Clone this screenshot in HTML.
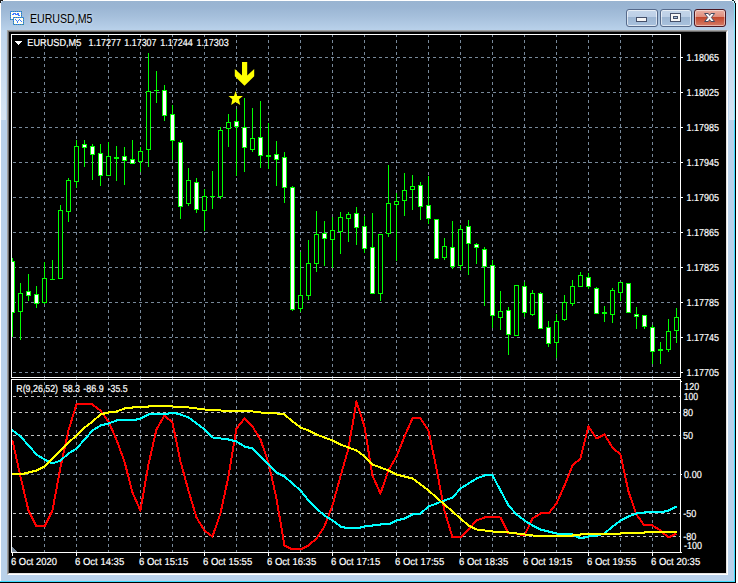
<!DOCTYPE html>
<html lang="en">
<head>
<meta charset="utf-8">
<title>EURUSD,M5</title>
<style>
html,body{margin:0;padding:0;background:#fff;}
body{width:738px;height:583px;overflow:hidden;position:relative;font-family:"Liberation Sans",sans-serif;}
#win{position:absolute;left:0;top:0;width:738px;height:583px;overflow:hidden;}
#frame{position:absolute;left:1px;top:1px;width:733px;height:580px;background:#b9d1ea;}
#titlebar{position:absolute;left:0;top:0;width:733px;height:29px;background:linear-gradient(to bottom,#99b4d1 0px,#9ab5d3 6px,#a6c0dc 16px,#b9d1ea 29px);}
#title{position:absolute;left:28.6px;top:10px;font-size:13px;line-height:16px;color:#000;white-space:pre;transform-origin:0 0;transform:scaleX(0.815);text-shadow:0 0 4px rgba(255,255,255,.7);}
.btn{position:absolute;box-sizing:border-box;top:8px;width:32px;height:18px;border:1px solid #566a8b;border-radius:3px;box-shadow:inset 0 0 0 1px rgba(255,255,255,.6);background:linear-gradient(to bottom,#c4d5ea 0,#bccfe6 7px,#9cb5d2 7px,#a9c2de 16px);}
#bmin{left:625px;} #bmax{left:659px;}
#bclose{left:693px;border-color:#4b1722;box-shadow:inset 0 0 0 1px rgba(255,255,255,.45);background:linear-gradient(to bottom,#eab0a4 0,#df8d7c 7px,#c1452b 7px,#d67c67 16px);}
#edge{position:absolute;left:6px;top:29px;width:717px;height:541px;border-style:solid;border-width:2px;border-color:#a0a0a0 #fff #fff #a0a0a0;}
#edge2{position:absolute;left:7px;top:30px;width:717px;height:541px;border-style:solid;border-width:1px;border-color:#696969 #e3e3e3 #e3e3e3 #696969;}
svg{position:absolute;left:0;top:0;}
svg text{font-family:"Liberation Sans",sans-serif;stroke:#fff;stroke-width:0.2px;text-rendering:geometricPrecision;}
</style>
</head>
<body>
<div id="win">
<div id="frame">
  <div id="titlebar">
    <div id="title">EURUSD,M5</div>
    <div class="btn" id="bmin"></div>
    <div class="btn" id="bmax"></div>
    <div class="btn" id="bclose"></div>
  </div>
  <div id="edge"></div><div id="edge2"></div>
</div>
<svg id="deco" width="738" height="583" viewBox="0 0 738 583" shape-rendering="crispEdges">
<rect x="0" y="581" width="735" height="1" fill="#3ddcff"/>
<rect x="0" y="582" width="736" height="1" fill="#000"/>
<rect x="734" y="3" width="1" height="579" fill="#3ddcff"/>
<rect x="734" y="3" width="1" height="117" fill="#fff" fill-opacity="0.35"/>
<rect x="735" y="3" width="1" height="580" fill="#000"/>
<path d="M0 0h3v1h-2v2h-1z" fill="#1c1c1c"/>
<rect x="1" y="1" width="1" height="1" fill="#e8eef6"/>
<path d="M732 0h2v1h1v2h-1v-2h-2z" fill="#0c2a30"/>
<path d="M732 1h2v2h-1v-1h-1z" fill="#d4f4fc"/>
<rect x="735" y="0" width="1" height="3" fill="#e4e4e4"/>
<defs><linearGradient id="hl" x1="0" y1="0" x2="0" y2="1"><stop offset="0" stop-color="#fff" stop-opacity="0.08"/><stop offset="1" stop-color="#fff" stop-opacity="0.42"/></linearGradient></defs>
<rect x="1" y="30" width="5" height="90" fill="url(#hl)"/>
<rect x="729" y="30" width="5" height="90" fill="url(#hl)"/>
<g id="icon">
<rect x="10.5" y="11.5" width="11" height="8" fill="#fffff4" stroke="#3f86ff"/>
<rect x="10.5" y="11.5" width="11" height="8" fill="none" stroke="#3f8f8f" stroke-dasharray="1 1"/>
<path d="M12 14.5h1.5v-1h1.5v1h2v-1h1.5v1.5h1.5" fill="none" stroke="#3f7cff"/>
<rect x="13.5" y="17.5" width="10" height="7" fill="#fffff4" stroke="#3f86ff"/>
<rect x="13.5" y="17.5" width="10" height="7" fill="none" stroke="#3f8f8f" stroke-dasharray="1 1"/>
<path d="M15 19h1v1h1v1h1v1h1v-1h0v-1h1v-1h1v1h0v1h1v1h1v-1" fill="none" stroke="none"/>
<path fill="#3f7cff" d="M15 19h1v1h-1zM16 20h1v1h-1zM17 21h1v1h-1zM18 20h1v1h-1zM19 19h1v1h-1zM20 20h1v1h-1zM21 21h1v1h-1zM17 22h1v1h-1z"/>
</g>
<g id="glyphs">
<rect x="636.5" y="17.5" width="10" height="4" fill="#f6f6f6" stroke="#45506a"/>
<rect x="670.5" y="13.5" width="10" height="8" fill="#f6f6f6" stroke="#45506a"/>
<rect x="673.5" y="16.5" width="4" height="2" fill="#a9c3df" stroke="#45506a"/>
</g>
<g id="xglyph" shape-rendering="geometricPrecision">
<path d="M704.6 13.5h3.7l1.3 1.9l1.3-1.9h3.7l-3.2 4l3.2 4h-3.7l-1.3-1.9l-1.3 1.9h-3.7l3.2-4z" fill="#fafafa" stroke="#474a60" stroke-width="1" stroke-linejoin="round"/>
</g>
</svg>
<svg id="chart" width="738" height="583" viewBox="0 0 738 583" shape-rendering="crispEdges">
<rect x="9" y="32" width="717" height="541" fill="#000"/>
<g id="grid">
<path fill="#778899" d="M44 35v2h1v-2zM44 40v3h1v-3zM44 46v3h1v-3zM44 52v3h1v-3zM44 58v3h1v-3zM44 64v3h1v-3zM44 70v3h1v-3zM44 76v3h1v-3zM44 82v3h1v-3zM44 88v3h1v-3zM44 94v3h1v-3zM44 100v3h1v-3zM44 106v3h1v-3zM44 112v3h1v-3zM44 118v3h1v-3zM44 124v3h1v-3zM44 130v3h1v-3zM44 136v3h1v-3zM44 142v3h1v-3zM44 148v3h1v-3zM44 154v3h1v-3zM44 160v3h1v-3zM44 166v3h1v-3zM44 172v3h1v-3zM44 178v3h1v-3zM44 184v3h1v-3zM44 190v3h1v-3zM44 196v3h1v-3zM44 202v3h1v-3zM44 208v3h1v-3zM44 214v3h1v-3zM44 220v3h1v-3zM44 226v3h1v-3zM44 232v3h1v-3zM44 238v3h1v-3zM44 244v3h1v-3zM44 250v3h1v-3zM44 256v3h1v-3zM44 262v3h1v-3zM44 268v3h1v-3zM44 274v3h1v-3zM44 280v3h1v-3zM44 286v3h1v-3zM44 292v3h1v-3zM44 298v3h1v-3zM44 304v3h1v-3zM44 310v3h1v-3zM44 316v3h1v-3zM44 322v3h1v-3zM44 328v3h1v-3zM44 334v3h1v-3zM44 340v3h1v-3zM44 346v3h1v-3zM44 352v3h1v-3zM44 358v3h1v-3zM44 364v3h1v-3zM44 370v3h1v-3zM44 376v3h1v-3zM44 382v3h1v-3zM44 388v3h1v-3zM44 394v3h1v-3zM44 400v3h1v-3zM44 406v3h1v-3zM44 412v3h1v-3zM44 418v3h1v-3zM44 424v3h1v-3zM44 430v3h1v-3zM44 436v3h1v-3zM44 442v3h1v-3zM44 448v3h1v-3zM44 454v3h1v-3zM44 460v3h1v-3zM44 466v3h1v-3zM44 472v3h1v-3zM44 478v3h1v-3zM44 484v3h1v-3zM44 490v3h1v-3zM44 496v3h1v-3zM44 502v3h1v-3zM44 508v3h1v-3zM44 514v3h1v-3zM44 520v3h1v-3zM44 526v3h1v-3zM44 532v3h1v-3zM44 538v3h1v-3zM44 544v3h1v-3zM44 550v2h1v-2z"/>
<path fill="#778899" d="M76 35v2h1v-2zM76 40v3h1v-3zM76 46v3h1v-3zM76 52v3h1v-3zM76 58v3h1v-3zM76 64v3h1v-3zM76 70v3h1v-3zM76 76v3h1v-3zM76 82v3h1v-3zM76 88v3h1v-3zM76 94v3h1v-3zM76 100v3h1v-3zM76 106v3h1v-3zM76 112v3h1v-3zM76 118v3h1v-3zM76 124v3h1v-3zM76 130v3h1v-3zM76 136v3h1v-3zM76 142v3h1v-3zM76 148v3h1v-3zM76 154v3h1v-3zM76 160v3h1v-3zM76 166v3h1v-3zM76 172v3h1v-3zM76 178v3h1v-3zM76 184v3h1v-3zM76 190v3h1v-3zM76 196v3h1v-3zM76 202v3h1v-3zM76 208v3h1v-3zM76 214v3h1v-3zM76 220v3h1v-3zM76 226v3h1v-3zM76 232v3h1v-3zM76 238v3h1v-3zM76 244v3h1v-3zM76 250v3h1v-3zM76 256v3h1v-3zM76 262v3h1v-3zM76 268v3h1v-3zM76 274v3h1v-3zM76 280v3h1v-3zM76 286v3h1v-3zM76 292v3h1v-3zM76 298v3h1v-3zM76 304v3h1v-3zM76 310v3h1v-3zM76 316v3h1v-3zM76 322v3h1v-3zM76 328v3h1v-3zM76 334v3h1v-3zM76 340v3h1v-3zM76 346v3h1v-3zM76 352v3h1v-3zM76 358v3h1v-3zM76 364v3h1v-3zM76 370v3h1v-3zM76 376v3h1v-3zM76 382v3h1v-3zM76 388v3h1v-3zM76 394v3h1v-3zM76 400v3h1v-3zM76 406v3h1v-3zM76 412v3h1v-3zM76 418v3h1v-3zM76 424v3h1v-3zM76 430v3h1v-3zM76 436v3h1v-3zM76 442v3h1v-3zM76 448v3h1v-3zM76 454v3h1v-3zM76 460v3h1v-3zM76 466v3h1v-3zM76 472v3h1v-3zM76 478v3h1v-3zM76 484v3h1v-3zM76 490v3h1v-3zM76 496v3h1v-3zM76 502v3h1v-3zM76 508v3h1v-3zM76 514v3h1v-3zM76 520v3h1v-3zM76 526v3h1v-3zM76 532v3h1v-3zM76 538v3h1v-3zM76 544v3h1v-3zM76 550v2h1v-2z"/>
<path fill="#778899" d="M108 35v2h1v-2zM108 40v3h1v-3zM108 46v3h1v-3zM108 52v3h1v-3zM108 58v3h1v-3zM108 64v3h1v-3zM108 70v3h1v-3zM108 76v3h1v-3zM108 82v3h1v-3zM108 88v3h1v-3zM108 94v3h1v-3zM108 100v3h1v-3zM108 106v3h1v-3zM108 112v3h1v-3zM108 118v3h1v-3zM108 124v3h1v-3zM108 130v3h1v-3zM108 136v3h1v-3zM108 142v3h1v-3zM108 148v3h1v-3zM108 154v3h1v-3zM108 160v3h1v-3zM108 166v3h1v-3zM108 172v3h1v-3zM108 178v3h1v-3zM108 184v3h1v-3zM108 190v3h1v-3zM108 196v3h1v-3zM108 202v3h1v-3zM108 208v3h1v-3zM108 214v3h1v-3zM108 220v3h1v-3zM108 226v3h1v-3zM108 232v3h1v-3zM108 238v3h1v-3zM108 244v3h1v-3zM108 250v3h1v-3zM108 256v3h1v-3zM108 262v3h1v-3zM108 268v3h1v-3zM108 274v3h1v-3zM108 280v3h1v-3zM108 286v3h1v-3zM108 292v3h1v-3zM108 298v3h1v-3zM108 304v3h1v-3zM108 310v3h1v-3zM108 316v3h1v-3zM108 322v3h1v-3zM108 328v3h1v-3zM108 334v3h1v-3zM108 340v3h1v-3zM108 346v3h1v-3zM108 352v3h1v-3zM108 358v3h1v-3zM108 364v3h1v-3zM108 370v3h1v-3zM108 376v3h1v-3zM108 382v3h1v-3zM108 388v3h1v-3zM108 394v3h1v-3zM108 400v3h1v-3zM108 406v3h1v-3zM108 412v3h1v-3zM108 418v3h1v-3zM108 424v3h1v-3zM108 430v3h1v-3zM108 436v3h1v-3zM108 442v3h1v-3zM108 448v3h1v-3zM108 454v3h1v-3zM108 460v3h1v-3zM108 466v3h1v-3zM108 472v3h1v-3zM108 478v3h1v-3zM108 484v3h1v-3zM108 490v3h1v-3zM108 496v3h1v-3zM108 502v3h1v-3zM108 508v3h1v-3zM108 514v3h1v-3zM108 520v3h1v-3zM108 526v3h1v-3zM108 532v3h1v-3zM108 538v3h1v-3zM108 544v3h1v-3zM108 550v2h1v-2z"/>
<path fill="#778899" d="M140 35v2h1v-2zM140 40v3h1v-3zM140 46v3h1v-3zM140 52v3h1v-3zM140 58v3h1v-3zM140 64v3h1v-3zM140 70v3h1v-3zM140 76v3h1v-3zM140 82v3h1v-3zM140 88v3h1v-3zM140 94v3h1v-3zM140 100v3h1v-3zM140 106v3h1v-3zM140 112v3h1v-3zM140 118v3h1v-3zM140 124v3h1v-3zM140 130v3h1v-3zM140 136v3h1v-3zM140 142v3h1v-3zM140 148v3h1v-3zM140 154v3h1v-3zM140 160v3h1v-3zM140 166v3h1v-3zM140 172v3h1v-3zM140 178v3h1v-3zM140 184v3h1v-3zM140 190v3h1v-3zM140 196v3h1v-3zM140 202v3h1v-3zM140 208v3h1v-3zM140 214v3h1v-3zM140 220v3h1v-3zM140 226v3h1v-3zM140 232v3h1v-3zM140 238v3h1v-3zM140 244v3h1v-3zM140 250v3h1v-3zM140 256v3h1v-3zM140 262v3h1v-3zM140 268v3h1v-3zM140 274v3h1v-3zM140 280v3h1v-3zM140 286v3h1v-3zM140 292v3h1v-3zM140 298v3h1v-3zM140 304v3h1v-3zM140 310v3h1v-3zM140 316v3h1v-3zM140 322v3h1v-3zM140 328v3h1v-3zM140 334v3h1v-3zM140 340v3h1v-3zM140 346v3h1v-3zM140 352v3h1v-3zM140 358v3h1v-3zM140 364v3h1v-3zM140 370v3h1v-3zM140 376v3h1v-3zM140 382v3h1v-3zM140 388v3h1v-3zM140 394v3h1v-3zM140 400v3h1v-3zM140 406v3h1v-3zM140 412v3h1v-3zM140 418v3h1v-3zM140 424v3h1v-3zM140 430v3h1v-3zM140 436v3h1v-3zM140 442v3h1v-3zM140 448v3h1v-3zM140 454v3h1v-3zM140 460v3h1v-3zM140 466v3h1v-3zM140 472v3h1v-3zM140 478v3h1v-3zM140 484v3h1v-3zM140 490v3h1v-3zM140 496v3h1v-3zM140 502v3h1v-3zM140 508v3h1v-3zM140 514v3h1v-3zM140 520v3h1v-3zM140 526v3h1v-3zM140 532v3h1v-3zM140 538v3h1v-3zM140 544v3h1v-3zM140 550v2h1v-2z"/>
<path fill="#778899" d="M172 35v2h1v-2zM172 40v3h1v-3zM172 46v3h1v-3zM172 52v3h1v-3zM172 58v3h1v-3zM172 64v3h1v-3zM172 70v3h1v-3zM172 76v3h1v-3zM172 82v3h1v-3zM172 88v3h1v-3zM172 94v3h1v-3zM172 100v3h1v-3zM172 106v3h1v-3zM172 112v3h1v-3zM172 118v3h1v-3zM172 124v3h1v-3zM172 130v3h1v-3zM172 136v3h1v-3zM172 142v3h1v-3zM172 148v3h1v-3zM172 154v3h1v-3zM172 160v3h1v-3zM172 166v3h1v-3zM172 172v3h1v-3zM172 178v3h1v-3zM172 184v3h1v-3zM172 190v3h1v-3zM172 196v3h1v-3zM172 202v3h1v-3zM172 208v3h1v-3zM172 214v3h1v-3zM172 220v3h1v-3zM172 226v3h1v-3zM172 232v3h1v-3zM172 238v3h1v-3zM172 244v3h1v-3zM172 250v3h1v-3zM172 256v3h1v-3zM172 262v3h1v-3zM172 268v3h1v-3zM172 274v3h1v-3zM172 280v3h1v-3zM172 286v3h1v-3zM172 292v3h1v-3zM172 298v3h1v-3zM172 304v3h1v-3zM172 310v3h1v-3zM172 316v3h1v-3zM172 322v3h1v-3zM172 328v3h1v-3zM172 334v3h1v-3zM172 340v3h1v-3zM172 346v3h1v-3zM172 352v3h1v-3zM172 358v3h1v-3zM172 364v3h1v-3zM172 370v3h1v-3zM172 376v3h1v-3zM172 382v3h1v-3zM172 388v3h1v-3zM172 394v3h1v-3zM172 400v3h1v-3zM172 406v3h1v-3zM172 412v3h1v-3zM172 418v3h1v-3zM172 424v3h1v-3zM172 430v3h1v-3zM172 436v3h1v-3zM172 442v3h1v-3zM172 448v3h1v-3zM172 454v3h1v-3zM172 460v3h1v-3zM172 466v3h1v-3zM172 472v3h1v-3zM172 478v3h1v-3zM172 484v3h1v-3zM172 490v3h1v-3zM172 496v3h1v-3zM172 502v3h1v-3zM172 508v3h1v-3zM172 514v3h1v-3zM172 520v3h1v-3zM172 526v3h1v-3zM172 532v3h1v-3zM172 538v3h1v-3zM172 544v3h1v-3zM172 550v2h1v-2z"/>
<path fill="#778899" d="M204 35v2h1v-2zM204 40v3h1v-3zM204 46v3h1v-3zM204 52v3h1v-3zM204 58v3h1v-3zM204 64v3h1v-3zM204 70v3h1v-3zM204 76v3h1v-3zM204 82v3h1v-3zM204 88v3h1v-3zM204 94v3h1v-3zM204 100v3h1v-3zM204 106v3h1v-3zM204 112v3h1v-3zM204 118v3h1v-3zM204 124v3h1v-3zM204 130v3h1v-3zM204 136v3h1v-3zM204 142v3h1v-3zM204 148v3h1v-3zM204 154v3h1v-3zM204 160v3h1v-3zM204 166v3h1v-3zM204 172v3h1v-3zM204 178v3h1v-3zM204 184v3h1v-3zM204 190v3h1v-3zM204 196v3h1v-3zM204 202v3h1v-3zM204 208v3h1v-3zM204 214v3h1v-3zM204 220v3h1v-3zM204 226v3h1v-3zM204 232v3h1v-3zM204 238v3h1v-3zM204 244v3h1v-3zM204 250v3h1v-3zM204 256v3h1v-3zM204 262v3h1v-3zM204 268v3h1v-3zM204 274v3h1v-3zM204 280v3h1v-3zM204 286v3h1v-3zM204 292v3h1v-3zM204 298v3h1v-3zM204 304v3h1v-3zM204 310v3h1v-3zM204 316v3h1v-3zM204 322v3h1v-3zM204 328v3h1v-3zM204 334v3h1v-3zM204 340v3h1v-3zM204 346v3h1v-3zM204 352v3h1v-3zM204 358v3h1v-3zM204 364v3h1v-3zM204 370v3h1v-3zM204 376v3h1v-3zM204 382v3h1v-3zM204 388v3h1v-3zM204 394v3h1v-3zM204 400v3h1v-3zM204 406v3h1v-3zM204 412v3h1v-3zM204 418v3h1v-3zM204 424v3h1v-3zM204 430v3h1v-3zM204 436v3h1v-3zM204 442v3h1v-3zM204 448v3h1v-3zM204 454v3h1v-3zM204 460v3h1v-3zM204 466v3h1v-3zM204 472v3h1v-3zM204 478v3h1v-3zM204 484v3h1v-3zM204 490v3h1v-3zM204 496v3h1v-3zM204 502v3h1v-3zM204 508v3h1v-3zM204 514v3h1v-3zM204 520v3h1v-3zM204 526v3h1v-3zM204 532v3h1v-3zM204 538v3h1v-3zM204 544v3h1v-3zM204 550v2h1v-2z"/>
<path fill="#778899" d="M236 35v2h1v-2zM236 40v3h1v-3zM236 46v3h1v-3zM236 52v3h1v-3zM236 58v3h1v-3zM236 64v3h1v-3zM236 70v3h1v-3zM236 76v3h1v-3zM236 82v3h1v-3zM236 88v3h1v-3zM236 94v3h1v-3zM236 100v3h1v-3zM236 106v3h1v-3zM236 112v3h1v-3zM236 118v3h1v-3zM236 124v3h1v-3zM236 130v3h1v-3zM236 136v3h1v-3zM236 142v3h1v-3zM236 148v3h1v-3zM236 154v3h1v-3zM236 160v3h1v-3zM236 166v3h1v-3zM236 172v3h1v-3zM236 178v3h1v-3zM236 184v3h1v-3zM236 190v3h1v-3zM236 196v3h1v-3zM236 202v3h1v-3zM236 208v3h1v-3zM236 214v3h1v-3zM236 220v3h1v-3zM236 226v3h1v-3zM236 232v3h1v-3zM236 238v3h1v-3zM236 244v3h1v-3zM236 250v3h1v-3zM236 256v3h1v-3zM236 262v3h1v-3zM236 268v3h1v-3zM236 274v3h1v-3zM236 280v3h1v-3zM236 286v3h1v-3zM236 292v3h1v-3zM236 298v3h1v-3zM236 304v3h1v-3zM236 310v3h1v-3zM236 316v3h1v-3zM236 322v3h1v-3zM236 328v3h1v-3zM236 334v3h1v-3zM236 340v3h1v-3zM236 346v3h1v-3zM236 352v3h1v-3zM236 358v3h1v-3zM236 364v3h1v-3zM236 370v3h1v-3zM236 376v3h1v-3zM236 382v3h1v-3zM236 388v3h1v-3zM236 394v3h1v-3zM236 400v3h1v-3zM236 406v3h1v-3zM236 412v3h1v-3zM236 418v3h1v-3zM236 424v3h1v-3zM236 430v3h1v-3zM236 436v3h1v-3zM236 442v3h1v-3zM236 448v3h1v-3zM236 454v3h1v-3zM236 460v3h1v-3zM236 466v3h1v-3zM236 472v3h1v-3zM236 478v3h1v-3zM236 484v3h1v-3zM236 490v3h1v-3zM236 496v3h1v-3zM236 502v3h1v-3zM236 508v3h1v-3zM236 514v3h1v-3zM236 520v3h1v-3zM236 526v3h1v-3zM236 532v3h1v-3zM236 538v3h1v-3zM236 544v3h1v-3zM236 550v2h1v-2z"/>
<path fill="#778899" d="M268 35v2h1v-2zM268 40v3h1v-3zM268 46v3h1v-3zM268 52v3h1v-3zM268 58v3h1v-3zM268 64v3h1v-3zM268 70v3h1v-3zM268 76v3h1v-3zM268 82v3h1v-3zM268 88v3h1v-3zM268 94v3h1v-3zM268 100v3h1v-3zM268 106v3h1v-3zM268 112v3h1v-3zM268 118v3h1v-3zM268 124v3h1v-3zM268 130v3h1v-3zM268 136v3h1v-3zM268 142v3h1v-3zM268 148v3h1v-3zM268 154v3h1v-3zM268 160v3h1v-3zM268 166v3h1v-3zM268 172v3h1v-3zM268 178v3h1v-3zM268 184v3h1v-3zM268 190v3h1v-3zM268 196v3h1v-3zM268 202v3h1v-3zM268 208v3h1v-3zM268 214v3h1v-3zM268 220v3h1v-3zM268 226v3h1v-3zM268 232v3h1v-3zM268 238v3h1v-3zM268 244v3h1v-3zM268 250v3h1v-3zM268 256v3h1v-3zM268 262v3h1v-3zM268 268v3h1v-3zM268 274v3h1v-3zM268 280v3h1v-3zM268 286v3h1v-3zM268 292v3h1v-3zM268 298v3h1v-3zM268 304v3h1v-3zM268 310v3h1v-3zM268 316v3h1v-3zM268 322v3h1v-3zM268 328v3h1v-3zM268 334v3h1v-3zM268 340v3h1v-3zM268 346v3h1v-3zM268 352v3h1v-3zM268 358v3h1v-3zM268 364v3h1v-3zM268 370v3h1v-3zM268 376v3h1v-3zM268 382v3h1v-3zM268 388v3h1v-3zM268 394v3h1v-3zM268 400v3h1v-3zM268 406v3h1v-3zM268 412v3h1v-3zM268 418v3h1v-3zM268 424v3h1v-3zM268 430v3h1v-3zM268 436v3h1v-3zM268 442v3h1v-3zM268 448v3h1v-3zM268 454v3h1v-3zM268 460v3h1v-3zM268 466v3h1v-3zM268 472v3h1v-3zM268 478v3h1v-3zM268 484v3h1v-3zM268 490v3h1v-3zM268 496v3h1v-3zM268 502v3h1v-3zM268 508v3h1v-3zM268 514v3h1v-3zM268 520v3h1v-3zM268 526v3h1v-3zM268 532v3h1v-3zM268 538v3h1v-3zM268 544v3h1v-3zM268 550v2h1v-2z"/>
<path fill="#778899" d="M300 35v2h1v-2zM300 40v3h1v-3zM300 46v3h1v-3zM300 52v3h1v-3zM300 58v3h1v-3zM300 64v3h1v-3zM300 70v3h1v-3zM300 76v3h1v-3zM300 82v3h1v-3zM300 88v3h1v-3zM300 94v3h1v-3zM300 100v3h1v-3zM300 106v3h1v-3zM300 112v3h1v-3zM300 118v3h1v-3zM300 124v3h1v-3zM300 130v3h1v-3zM300 136v3h1v-3zM300 142v3h1v-3zM300 148v3h1v-3zM300 154v3h1v-3zM300 160v3h1v-3zM300 166v3h1v-3zM300 172v3h1v-3zM300 178v3h1v-3zM300 184v3h1v-3zM300 190v3h1v-3zM300 196v3h1v-3zM300 202v3h1v-3zM300 208v3h1v-3zM300 214v3h1v-3zM300 220v3h1v-3zM300 226v3h1v-3zM300 232v3h1v-3zM300 238v3h1v-3zM300 244v3h1v-3zM300 250v3h1v-3zM300 256v3h1v-3zM300 262v3h1v-3zM300 268v3h1v-3zM300 274v3h1v-3zM300 280v3h1v-3zM300 286v3h1v-3zM300 292v3h1v-3zM300 298v3h1v-3zM300 304v3h1v-3zM300 310v3h1v-3zM300 316v3h1v-3zM300 322v3h1v-3zM300 328v3h1v-3zM300 334v3h1v-3zM300 340v3h1v-3zM300 346v3h1v-3zM300 352v3h1v-3zM300 358v3h1v-3zM300 364v3h1v-3zM300 370v3h1v-3zM300 376v3h1v-3zM300 382v3h1v-3zM300 388v3h1v-3zM300 394v3h1v-3zM300 400v3h1v-3zM300 406v3h1v-3zM300 412v3h1v-3zM300 418v3h1v-3zM300 424v3h1v-3zM300 430v3h1v-3zM300 436v3h1v-3zM300 442v3h1v-3zM300 448v3h1v-3zM300 454v3h1v-3zM300 460v3h1v-3zM300 466v3h1v-3zM300 472v3h1v-3zM300 478v3h1v-3zM300 484v3h1v-3zM300 490v3h1v-3zM300 496v3h1v-3zM300 502v3h1v-3zM300 508v3h1v-3zM300 514v3h1v-3zM300 520v3h1v-3zM300 526v3h1v-3zM300 532v3h1v-3zM300 538v3h1v-3zM300 544v3h1v-3zM300 550v2h1v-2z"/>
<path fill="#778899" d="M332 35v2h1v-2zM332 40v3h1v-3zM332 46v3h1v-3zM332 52v3h1v-3zM332 58v3h1v-3zM332 64v3h1v-3zM332 70v3h1v-3zM332 76v3h1v-3zM332 82v3h1v-3zM332 88v3h1v-3zM332 94v3h1v-3zM332 100v3h1v-3zM332 106v3h1v-3zM332 112v3h1v-3zM332 118v3h1v-3zM332 124v3h1v-3zM332 130v3h1v-3zM332 136v3h1v-3zM332 142v3h1v-3zM332 148v3h1v-3zM332 154v3h1v-3zM332 160v3h1v-3zM332 166v3h1v-3zM332 172v3h1v-3zM332 178v3h1v-3zM332 184v3h1v-3zM332 190v3h1v-3zM332 196v3h1v-3zM332 202v3h1v-3zM332 208v3h1v-3zM332 214v3h1v-3zM332 220v3h1v-3zM332 226v3h1v-3zM332 232v3h1v-3zM332 238v3h1v-3zM332 244v3h1v-3zM332 250v3h1v-3zM332 256v3h1v-3zM332 262v3h1v-3zM332 268v3h1v-3zM332 274v3h1v-3zM332 280v3h1v-3zM332 286v3h1v-3zM332 292v3h1v-3zM332 298v3h1v-3zM332 304v3h1v-3zM332 310v3h1v-3zM332 316v3h1v-3zM332 322v3h1v-3zM332 328v3h1v-3zM332 334v3h1v-3zM332 340v3h1v-3zM332 346v3h1v-3zM332 352v3h1v-3zM332 358v3h1v-3zM332 364v3h1v-3zM332 370v3h1v-3zM332 376v3h1v-3zM332 382v3h1v-3zM332 388v3h1v-3zM332 394v3h1v-3zM332 400v3h1v-3zM332 406v3h1v-3zM332 412v3h1v-3zM332 418v3h1v-3zM332 424v3h1v-3zM332 430v3h1v-3zM332 436v3h1v-3zM332 442v3h1v-3zM332 448v3h1v-3zM332 454v3h1v-3zM332 460v3h1v-3zM332 466v3h1v-3zM332 472v3h1v-3zM332 478v3h1v-3zM332 484v3h1v-3zM332 490v3h1v-3zM332 496v3h1v-3zM332 502v3h1v-3zM332 508v3h1v-3zM332 514v3h1v-3zM332 520v3h1v-3zM332 526v3h1v-3zM332 532v3h1v-3zM332 538v3h1v-3zM332 544v3h1v-3zM332 550v2h1v-2z"/>
<path fill="#778899" d="M364 35v2h1v-2zM364 40v3h1v-3zM364 46v3h1v-3zM364 52v3h1v-3zM364 58v3h1v-3zM364 64v3h1v-3zM364 70v3h1v-3zM364 76v3h1v-3zM364 82v3h1v-3zM364 88v3h1v-3zM364 94v3h1v-3zM364 100v3h1v-3zM364 106v3h1v-3zM364 112v3h1v-3zM364 118v3h1v-3zM364 124v3h1v-3zM364 130v3h1v-3zM364 136v3h1v-3zM364 142v3h1v-3zM364 148v3h1v-3zM364 154v3h1v-3zM364 160v3h1v-3zM364 166v3h1v-3zM364 172v3h1v-3zM364 178v3h1v-3zM364 184v3h1v-3zM364 190v3h1v-3zM364 196v3h1v-3zM364 202v3h1v-3zM364 208v3h1v-3zM364 214v3h1v-3zM364 220v3h1v-3zM364 226v3h1v-3zM364 232v3h1v-3zM364 238v3h1v-3zM364 244v3h1v-3zM364 250v3h1v-3zM364 256v3h1v-3zM364 262v3h1v-3zM364 268v3h1v-3zM364 274v3h1v-3zM364 280v3h1v-3zM364 286v3h1v-3zM364 292v3h1v-3zM364 298v3h1v-3zM364 304v3h1v-3zM364 310v3h1v-3zM364 316v3h1v-3zM364 322v3h1v-3zM364 328v3h1v-3zM364 334v3h1v-3zM364 340v3h1v-3zM364 346v3h1v-3zM364 352v3h1v-3zM364 358v3h1v-3zM364 364v3h1v-3zM364 370v3h1v-3zM364 376v3h1v-3zM364 382v3h1v-3zM364 388v3h1v-3zM364 394v3h1v-3zM364 400v3h1v-3zM364 406v3h1v-3zM364 412v3h1v-3zM364 418v3h1v-3zM364 424v3h1v-3zM364 430v3h1v-3zM364 436v3h1v-3zM364 442v3h1v-3zM364 448v3h1v-3zM364 454v3h1v-3zM364 460v3h1v-3zM364 466v3h1v-3zM364 472v3h1v-3zM364 478v3h1v-3zM364 484v3h1v-3zM364 490v3h1v-3zM364 496v3h1v-3zM364 502v3h1v-3zM364 508v3h1v-3zM364 514v3h1v-3zM364 520v3h1v-3zM364 526v3h1v-3zM364 532v3h1v-3zM364 538v3h1v-3zM364 544v3h1v-3zM364 550v2h1v-2z"/>
<path fill="#778899" d="M396 35v2h1v-2zM396 40v3h1v-3zM396 46v3h1v-3zM396 52v3h1v-3zM396 58v3h1v-3zM396 64v3h1v-3zM396 70v3h1v-3zM396 76v3h1v-3zM396 82v3h1v-3zM396 88v3h1v-3zM396 94v3h1v-3zM396 100v3h1v-3zM396 106v3h1v-3zM396 112v3h1v-3zM396 118v3h1v-3zM396 124v3h1v-3zM396 130v3h1v-3zM396 136v3h1v-3zM396 142v3h1v-3zM396 148v3h1v-3zM396 154v3h1v-3zM396 160v3h1v-3zM396 166v3h1v-3zM396 172v3h1v-3zM396 178v3h1v-3zM396 184v3h1v-3zM396 190v3h1v-3zM396 196v3h1v-3zM396 202v3h1v-3zM396 208v3h1v-3zM396 214v3h1v-3zM396 220v3h1v-3zM396 226v3h1v-3zM396 232v3h1v-3zM396 238v3h1v-3zM396 244v3h1v-3zM396 250v3h1v-3zM396 256v3h1v-3zM396 262v3h1v-3zM396 268v3h1v-3zM396 274v3h1v-3zM396 280v3h1v-3zM396 286v3h1v-3zM396 292v3h1v-3zM396 298v3h1v-3zM396 304v3h1v-3zM396 310v3h1v-3zM396 316v3h1v-3zM396 322v3h1v-3zM396 328v3h1v-3zM396 334v3h1v-3zM396 340v3h1v-3zM396 346v3h1v-3zM396 352v3h1v-3zM396 358v3h1v-3zM396 364v3h1v-3zM396 370v3h1v-3zM396 376v3h1v-3zM396 382v3h1v-3zM396 388v3h1v-3zM396 394v3h1v-3zM396 400v3h1v-3zM396 406v3h1v-3zM396 412v3h1v-3zM396 418v3h1v-3zM396 424v3h1v-3zM396 430v3h1v-3zM396 436v3h1v-3zM396 442v3h1v-3zM396 448v3h1v-3zM396 454v3h1v-3zM396 460v3h1v-3zM396 466v3h1v-3zM396 472v3h1v-3zM396 478v3h1v-3zM396 484v3h1v-3zM396 490v3h1v-3zM396 496v3h1v-3zM396 502v3h1v-3zM396 508v3h1v-3zM396 514v3h1v-3zM396 520v3h1v-3zM396 526v3h1v-3zM396 532v3h1v-3zM396 538v3h1v-3zM396 544v3h1v-3zM396 550v2h1v-2z"/>
<path fill="#778899" d="M428 35v2h1v-2zM428 40v3h1v-3zM428 46v3h1v-3zM428 52v3h1v-3zM428 58v3h1v-3zM428 64v3h1v-3zM428 70v3h1v-3zM428 76v3h1v-3zM428 82v3h1v-3zM428 88v3h1v-3zM428 94v3h1v-3zM428 100v3h1v-3zM428 106v3h1v-3zM428 112v3h1v-3zM428 118v3h1v-3zM428 124v3h1v-3zM428 130v3h1v-3zM428 136v3h1v-3zM428 142v3h1v-3zM428 148v3h1v-3zM428 154v3h1v-3zM428 160v3h1v-3zM428 166v3h1v-3zM428 172v3h1v-3zM428 178v3h1v-3zM428 184v3h1v-3zM428 190v3h1v-3zM428 196v3h1v-3zM428 202v3h1v-3zM428 208v3h1v-3zM428 214v3h1v-3zM428 220v3h1v-3zM428 226v3h1v-3zM428 232v3h1v-3zM428 238v3h1v-3zM428 244v3h1v-3zM428 250v3h1v-3zM428 256v3h1v-3zM428 262v3h1v-3zM428 268v3h1v-3zM428 274v3h1v-3zM428 280v3h1v-3zM428 286v3h1v-3zM428 292v3h1v-3zM428 298v3h1v-3zM428 304v3h1v-3zM428 310v3h1v-3zM428 316v3h1v-3zM428 322v3h1v-3zM428 328v3h1v-3zM428 334v3h1v-3zM428 340v3h1v-3zM428 346v3h1v-3zM428 352v3h1v-3zM428 358v3h1v-3zM428 364v3h1v-3zM428 370v3h1v-3zM428 376v3h1v-3zM428 382v3h1v-3zM428 388v3h1v-3zM428 394v3h1v-3zM428 400v3h1v-3zM428 406v3h1v-3zM428 412v3h1v-3zM428 418v3h1v-3zM428 424v3h1v-3zM428 430v3h1v-3zM428 436v3h1v-3zM428 442v3h1v-3zM428 448v3h1v-3zM428 454v3h1v-3zM428 460v3h1v-3zM428 466v3h1v-3zM428 472v3h1v-3zM428 478v3h1v-3zM428 484v3h1v-3zM428 490v3h1v-3zM428 496v3h1v-3zM428 502v3h1v-3zM428 508v3h1v-3zM428 514v3h1v-3zM428 520v3h1v-3zM428 526v3h1v-3zM428 532v3h1v-3zM428 538v3h1v-3zM428 544v3h1v-3zM428 550v2h1v-2z"/>
<path fill="#778899" d="M460 35v2h1v-2zM460 40v3h1v-3zM460 46v3h1v-3zM460 52v3h1v-3zM460 58v3h1v-3zM460 64v3h1v-3zM460 70v3h1v-3zM460 76v3h1v-3zM460 82v3h1v-3zM460 88v3h1v-3zM460 94v3h1v-3zM460 100v3h1v-3zM460 106v3h1v-3zM460 112v3h1v-3zM460 118v3h1v-3zM460 124v3h1v-3zM460 130v3h1v-3zM460 136v3h1v-3zM460 142v3h1v-3zM460 148v3h1v-3zM460 154v3h1v-3zM460 160v3h1v-3zM460 166v3h1v-3zM460 172v3h1v-3zM460 178v3h1v-3zM460 184v3h1v-3zM460 190v3h1v-3zM460 196v3h1v-3zM460 202v3h1v-3zM460 208v3h1v-3zM460 214v3h1v-3zM460 220v3h1v-3zM460 226v3h1v-3zM460 232v3h1v-3zM460 238v3h1v-3zM460 244v3h1v-3zM460 250v3h1v-3zM460 256v3h1v-3zM460 262v3h1v-3zM460 268v3h1v-3zM460 274v3h1v-3zM460 280v3h1v-3zM460 286v3h1v-3zM460 292v3h1v-3zM460 298v3h1v-3zM460 304v3h1v-3zM460 310v3h1v-3zM460 316v3h1v-3zM460 322v3h1v-3zM460 328v3h1v-3zM460 334v3h1v-3zM460 340v3h1v-3zM460 346v3h1v-3zM460 352v3h1v-3zM460 358v3h1v-3zM460 364v3h1v-3zM460 370v3h1v-3zM460 376v3h1v-3zM460 382v3h1v-3zM460 388v3h1v-3zM460 394v3h1v-3zM460 400v3h1v-3zM460 406v3h1v-3zM460 412v3h1v-3zM460 418v3h1v-3zM460 424v3h1v-3zM460 430v3h1v-3zM460 436v3h1v-3zM460 442v3h1v-3zM460 448v3h1v-3zM460 454v3h1v-3zM460 460v3h1v-3zM460 466v3h1v-3zM460 472v3h1v-3zM460 478v3h1v-3zM460 484v3h1v-3zM460 490v3h1v-3zM460 496v3h1v-3zM460 502v3h1v-3zM460 508v3h1v-3zM460 514v3h1v-3zM460 520v3h1v-3zM460 526v3h1v-3zM460 532v3h1v-3zM460 538v3h1v-3zM460 544v3h1v-3zM460 550v2h1v-2z"/>
<path fill="#778899" d="M492 35v2h1v-2zM492 40v3h1v-3zM492 46v3h1v-3zM492 52v3h1v-3zM492 58v3h1v-3zM492 64v3h1v-3zM492 70v3h1v-3zM492 76v3h1v-3zM492 82v3h1v-3zM492 88v3h1v-3zM492 94v3h1v-3zM492 100v3h1v-3zM492 106v3h1v-3zM492 112v3h1v-3zM492 118v3h1v-3zM492 124v3h1v-3zM492 130v3h1v-3zM492 136v3h1v-3zM492 142v3h1v-3zM492 148v3h1v-3zM492 154v3h1v-3zM492 160v3h1v-3zM492 166v3h1v-3zM492 172v3h1v-3zM492 178v3h1v-3zM492 184v3h1v-3zM492 190v3h1v-3zM492 196v3h1v-3zM492 202v3h1v-3zM492 208v3h1v-3zM492 214v3h1v-3zM492 220v3h1v-3zM492 226v3h1v-3zM492 232v3h1v-3zM492 238v3h1v-3zM492 244v3h1v-3zM492 250v3h1v-3zM492 256v3h1v-3zM492 262v3h1v-3zM492 268v3h1v-3zM492 274v3h1v-3zM492 280v3h1v-3zM492 286v3h1v-3zM492 292v3h1v-3zM492 298v3h1v-3zM492 304v3h1v-3zM492 310v3h1v-3zM492 316v3h1v-3zM492 322v3h1v-3zM492 328v3h1v-3zM492 334v3h1v-3zM492 340v3h1v-3zM492 346v3h1v-3zM492 352v3h1v-3zM492 358v3h1v-3zM492 364v3h1v-3zM492 370v3h1v-3zM492 376v3h1v-3zM492 382v3h1v-3zM492 388v3h1v-3zM492 394v3h1v-3zM492 400v3h1v-3zM492 406v3h1v-3zM492 412v3h1v-3zM492 418v3h1v-3zM492 424v3h1v-3zM492 430v3h1v-3zM492 436v3h1v-3zM492 442v3h1v-3zM492 448v3h1v-3zM492 454v3h1v-3zM492 460v3h1v-3zM492 466v3h1v-3zM492 472v3h1v-3zM492 478v3h1v-3zM492 484v3h1v-3zM492 490v3h1v-3zM492 496v3h1v-3zM492 502v3h1v-3zM492 508v3h1v-3zM492 514v3h1v-3zM492 520v3h1v-3zM492 526v3h1v-3zM492 532v3h1v-3zM492 538v3h1v-3zM492 544v3h1v-3zM492 550v2h1v-2z"/>
<path fill="#778899" d="M524 35v2h1v-2zM524 40v3h1v-3zM524 46v3h1v-3zM524 52v3h1v-3zM524 58v3h1v-3zM524 64v3h1v-3zM524 70v3h1v-3zM524 76v3h1v-3zM524 82v3h1v-3zM524 88v3h1v-3zM524 94v3h1v-3zM524 100v3h1v-3zM524 106v3h1v-3zM524 112v3h1v-3zM524 118v3h1v-3zM524 124v3h1v-3zM524 130v3h1v-3zM524 136v3h1v-3zM524 142v3h1v-3zM524 148v3h1v-3zM524 154v3h1v-3zM524 160v3h1v-3zM524 166v3h1v-3zM524 172v3h1v-3zM524 178v3h1v-3zM524 184v3h1v-3zM524 190v3h1v-3zM524 196v3h1v-3zM524 202v3h1v-3zM524 208v3h1v-3zM524 214v3h1v-3zM524 220v3h1v-3zM524 226v3h1v-3zM524 232v3h1v-3zM524 238v3h1v-3zM524 244v3h1v-3zM524 250v3h1v-3zM524 256v3h1v-3zM524 262v3h1v-3zM524 268v3h1v-3zM524 274v3h1v-3zM524 280v3h1v-3zM524 286v3h1v-3zM524 292v3h1v-3zM524 298v3h1v-3zM524 304v3h1v-3zM524 310v3h1v-3zM524 316v3h1v-3zM524 322v3h1v-3zM524 328v3h1v-3zM524 334v3h1v-3zM524 340v3h1v-3zM524 346v3h1v-3zM524 352v3h1v-3zM524 358v3h1v-3zM524 364v3h1v-3zM524 370v3h1v-3zM524 376v3h1v-3zM524 382v3h1v-3zM524 388v3h1v-3zM524 394v3h1v-3zM524 400v3h1v-3zM524 406v3h1v-3zM524 412v3h1v-3zM524 418v3h1v-3zM524 424v3h1v-3zM524 430v3h1v-3zM524 436v3h1v-3zM524 442v3h1v-3zM524 448v3h1v-3zM524 454v3h1v-3zM524 460v3h1v-3zM524 466v3h1v-3zM524 472v3h1v-3zM524 478v3h1v-3zM524 484v3h1v-3zM524 490v3h1v-3zM524 496v3h1v-3zM524 502v3h1v-3zM524 508v3h1v-3zM524 514v3h1v-3zM524 520v3h1v-3zM524 526v3h1v-3zM524 532v3h1v-3zM524 538v3h1v-3zM524 544v3h1v-3zM524 550v2h1v-2z"/>
<path fill="#778899" d="M556 35v2h1v-2zM556 40v3h1v-3zM556 46v3h1v-3zM556 52v3h1v-3zM556 58v3h1v-3zM556 64v3h1v-3zM556 70v3h1v-3zM556 76v3h1v-3zM556 82v3h1v-3zM556 88v3h1v-3zM556 94v3h1v-3zM556 100v3h1v-3zM556 106v3h1v-3zM556 112v3h1v-3zM556 118v3h1v-3zM556 124v3h1v-3zM556 130v3h1v-3zM556 136v3h1v-3zM556 142v3h1v-3zM556 148v3h1v-3zM556 154v3h1v-3zM556 160v3h1v-3zM556 166v3h1v-3zM556 172v3h1v-3zM556 178v3h1v-3zM556 184v3h1v-3zM556 190v3h1v-3zM556 196v3h1v-3zM556 202v3h1v-3zM556 208v3h1v-3zM556 214v3h1v-3zM556 220v3h1v-3zM556 226v3h1v-3zM556 232v3h1v-3zM556 238v3h1v-3zM556 244v3h1v-3zM556 250v3h1v-3zM556 256v3h1v-3zM556 262v3h1v-3zM556 268v3h1v-3zM556 274v3h1v-3zM556 280v3h1v-3zM556 286v3h1v-3zM556 292v3h1v-3zM556 298v3h1v-3zM556 304v3h1v-3zM556 310v3h1v-3zM556 316v3h1v-3zM556 322v3h1v-3zM556 328v3h1v-3zM556 334v3h1v-3zM556 340v3h1v-3zM556 346v3h1v-3zM556 352v3h1v-3zM556 358v3h1v-3zM556 364v3h1v-3zM556 370v3h1v-3zM556 376v3h1v-3zM556 382v3h1v-3zM556 388v3h1v-3zM556 394v3h1v-3zM556 400v3h1v-3zM556 406v3h1v-3zM556 412v3h1v-3zM556 418v3h1v-3zM556 424v3h1v-3zM556 430v3h1v-3zM556 436v3h1v-3zM556 442v3h1v-3zM556 448v3h1v-3zM556 454v3h1v-3zM556 460v3h1v-3zM556 466v3h1v-3zM556 472v3h1v-3zM556 478v3h1v-3zM556 484v3h1v-3zM556 490v3h1v-3zM556 496v3h1v-3zM556 502v3h1v-3zM556 508v3h1v-3zM556 514v3h1v-3zM556 520v3h1v-3zM556 526v3h1v-3zM556 532v3h1v-3zM556 538v3h1v-3zM556 544v3h1v-3zM556 550v2h1v-2z"/>
<path fill="#778899" d="M588 35v2h1v-2zM588 40v3h1v-3zM588 46v3h1v-3zM588 52v3h1v-3zM588 58v3h1v-3zM588 64v3h1v-3zM588 70v3h1v-3zM588 76v3h1v-3zM588 82v3h1v-3zM588 88v3h1v-3zM588 94v3h1v-3zM588 100v3h1v-3zM588 106v3h1v-3zM588 112v3h1v-3zM588 118v3h1v-3zM588 124v3h1v-3zM588 130v3h1v-3zM588 136v3h1v-3zM588 142v3h1v-3zM588 148v3h1v-3zM588 154v3h1v-3zM588 160v3h1v-3zM588 166v3h1v-3zM588 172v3h1v-3zM588 178v3h1v-3zM588 184v3h1v-3zM588 190v3h1v-3zM588 196v3h1v-3zM588 202v3h1v-3zM588 208v3h1v-3zM588 214v3h1v-3zM588 220v3h1v-3zM588 226v3h1v-3zM588 232v3h1v-3zM588 238v3h1v-3zM588 244v3h1v-3zM588 250v3h1v-3zM588 256v3h1v-3zM588 262v3h1v-3zM588 268v3h1v-3zM588 274v3h1v-3zM588 280v3h1v-3zM588 286v3h1v-3zM588 292v3h1v-3zM588 298v3h1v-3zM588 304v3h1v-3zM588 310v3h1v-3zM588 316v3h1v-3zM588 322v3h1v-3zM588 328v3h1v-3zM588 334v3h1v-3zM588 340v3h1v-3zM588 346v3h1v-3zM588 352v3h1v-3zM588 358v3h1v-3zM588 364v3h1v-3zM588 370v3h1v-3zM588 376v3h1v-3zM588 382v3h1v-3zM588 388v3h1v-3zM588 394v3h1v-3zM588 400v3h1v-3zM588 406v3h1v-3zM588 412v3h1v-3zM588 418v3h1v-3zM588 424v3h1v-3zM588 430v3h1v-3zM588 436v3h1v-3zM588 442v3h1v-3zM588 448v3h1v-3zM588 454v3h1v-3zM588 460v3h1v-3zM588 466v3h1v-3zM588 472v3h1v-3zM588 478v3h1v-3zM588 484v3h1v-3zM588 490v3h1v-3zM588 496v3h1v-3zM588 502v3h1v-3zM588 508v3h1v-3zM588 514v3h1v-3zM588 520v3h1v-3zM588 526v3h1v-3zM588 532v3h1v-3zM588 538v3h1v-3zM588 544v3h1v-3zM588 550v2h1v-2z"/>
<path fill="#778899" d="M620 35v2h1v-2zM620 40v3h1v-3zM620 46v3h1v-3zM620 52v3h1v-3zM620 58v3h1v-3zM620 64v3h1v-3zM620 70v3h1v-3zM620 76v3h1v-3zM620 82v3h1v-3zM620 88v3h1v-3zM620 94v3h1v-3zM620 100v3h1v-3zM620 106v3h1v-3zM620 112v3h1v-3zM620 118v3h1v-3zM620 124v3h1v-3zM620 130v3h1v-3zM620 136v3h1v-3zM620 142v3h1v-3zM620 148v3h1v-3zM620 154v3h1v-3zM620 160v3h1v-3zM620 166v3h1v-3zM620 172v3h1v-3zM620 178v3h1v-3zM620 184v3h1v-3zM620 190v3h1v-3zM620 196v3h1v-3zM620 202v3h1v-3zM620 208v3h1v-3zM620 214v3h1v-3zM620 220v3h1v-3zM620 226v3h1v-3zM620 232v3h1v-3zM620 238v3h1v-3zM620 244v3h1v-3zM620 250v3h1v-3zM620 256v3h1v-3zM620 262v3h1v-3zM620 268v3h1v-3zM620 274v3h1v-3zM620 280v3h1v-3zM620 286v3h1v-3zM620 292v3h1v-3zM620 298v3h1v-3zM620 304v3h1v-3zM620 310v3h1v-3zM620 316v3h1v-3zM620 322v3h1v-3zM620 328v3h1v-3zM620 334v3h1v-3zM620 340v3h1v-3zM620 346v3h1v-3zM620 352v3h1v-3zM620 358v3h1v-3zM620 364v3h1v-3zM620 370v3h1v-3zM620 376v3h1v-3zM620 382v3h1v-3zM620 388v3h1v-3zM620 394v3h1v-3zM620 400v3h1v-3zM620 406v3h1v-3zM620 412v3h1v-3zM620 418v3h1v-3zM620 424v3h1v-3zM620 430v3h1v-3zM620 436v3h1v-3zM620 442v3h1v-3zM620 448v3h1v-3zM620 454v3h1v-3zM620 460v3h1v-3zM620 466v3h1v-3zM620 472v3h1v-3zM620 478v3h1v-3zM620 484v3h1v-3zM620 490v3h1v-3zM620 496v3h1v-3zM620 502v3h1v-3zM620 508v3h1v-3zM620 514v3h1v-3zM620 520v3h1v-3zM620 526v3h1v-3zM620 532v3h1v-3zM620 538v3h1v-3zM620 544v3h1v-3zM620 550v2h1v-2z"/>
<path fill="#778899" d="M652 35v2h1v-2zM652 40v3h1v-3zM652 46v3h1v-3zM652 52v3h1v-3zM652 58v3h1v-3zM652 64v3h1v-3zM652 70v3h1v-3zM652 76v3h1v-3zM652 82v3h1v-3zM652 88v3h1v-3zM652 94v3h1v-3zM652 100v3h1v-3zM652 106v3h1v-3zM652 112v3h1v-3zM652 118v3h1v-3zM652 124v3h1v-3zM652 130v3h1v-3zM652 136v3h1v-3zM652 142v3h1v-3zM652 148v3h1v-3zM652 154v3h1v-3zM652 160v3h1v-3zM652 166v3h1v-3zM652 172v3h1v-3zM652 178v3h1v-3zM652 184v3h1v-3zM652 190v3h1v-3zM652 196v3h1v-3zM652 202v3h1v-3zM652 208v3h1v-3zM652 214v3h1v-3zM652 220v3h1v-3zM652 226v3h1v-3zM652 232v3h1v-3zM652 238v3h1v-3zM652 244v3h1v-3zM652 250v3h1v-3zM652 256v3h1v-3zM652 262v3h1v-3zM652 268v3h1v-3zM652 274v3h1v-3zM652 280v3h1v-3zM652 286v3h1v-3zM652 292v3h1v-3zM652 298v3h1v-3zM652 304v3h1v-3zM652 310v3h1v-3zM652 316v3h1v-3zM652 322v3h1v-3zM652 328v3h1v-3zM652 334v3h1v-3zM652 340v3h1v-3zM652 346v3h1v-3zM652 352v3h1v-3zM652 358v3h1v-3zM652 364v3h1v-3zM652 370v3h1v-3zM652 376v3h1v-3zM652 382v3h1v-3zM652 388v3h1v-3zM652 394v3h1v-3zM652 400v3h1v-3zM652 406v3h1v-3zM652 412v3h1v-3zM652 418v3h1v-3zM652 424v3h1v-3zM652 430v3h1v-3zM652 436v3h1v-3zM652 442v3h1v-3zM652 448v3h1v-3zM652 454v3h1v-3zM652 460v3h1v-3zM652 466v3h1v-3zM652 472v3h1v-3zM652 478v3h1v-3zM652 484v3h1v-3zM652 490v3h1v-3zM652 496v3h1v-3zM652 502v3h1v-3zM652 508v3h1v-3zM652 514v3h1v-3zM652 520v3h1v-3zM652 526v3h1v-3zM652 532v3h1v-3zM652 538v3h1v-3zM652 544v3h1v-3zM652 550v2h1v-2z"/>
<path fill="#778899" d="M13 57h3v1h-3zM19 57h3v1h-3zM25 57h3v1h-3zM31 57h3v1h-3zM37 57h3v1h-3zM43 57h3v1h-3zM49 57h3v1h-3zM55 57h3v1h-3zM61 57h3v1h-3zM67 57h3v1h-3zM73 57h3v1h-3zM79 57h3v1h-3zM85 57h3v1h-3zM91 57h3v1h-3zM97 57h3v1h-3zM103 57h3v1h-3zM109 57h3v1h-3zM115 57h3v1h-3zM121 57h3v1h-3zM127 57h3v1h-3zM133 57h3v1h-3zM139 57h3v1h-3zM145 57h3v1h-3zM151 57h3v1h-3zM157 57h3v1h-3zM163 57h3v1h-3zM169 57h3v1h-3zM175 57h3v1h-3zM181 57h3v1h-3zM187 57h3v1h-3zM193 57h3v1h-3zM199 57h3v1h-3zM205 57h3v1h-3zM211 57h3v1h-3zM217 57h3v1h-3zM223 57h3v1h-3zM229 57h3v1h-3zM235 57h3v1h-3zM241 57h3v1h-3zM247 57h3v1h-3zM253 57h3v1h-3zM259 57h3v1h-3zM265 57h3v1h-3zM271 57h3v1h-3zM277 57h3v1h-3zM283 57h3v1h-3zM289 57h3v1h-3zM295 57h3v1h-3zM301 57h3v1h-3zM307 57h3v1h-3zM313 57h3v1h-3zM319 57h3v1h-3zM325 57h3v1h-3zM331 57h3v1h-3zM337 57h3v1h-3zM343 57h3v1h-3zM349 57h3v1h-3zM355 57h3v1h-3zM361 57h3v1h-3zM367 57h3v1h-3zM373 57h3v1h-3zM379 57h3v1h-3zM385 57h3v1h-3zM391 57h3v1h-3zM397 57h3v1h-3zM403 57h3v1h-3zM409 57h3v1h-3zM415 57h3v1h-3zM421 57h3v1h-3zM427 57h3v1h-3zM433 57h3v1h-3zM439 57h3v1h-3zM445 57h3v1h-3zM451 57h3v1h-3zM457 57h3v1h-3zM463 57h3v1h-3zM469 57h3v1h-3zM475 57h3v1h-3zM481 57h3v1h-3zM487 57h3v1h-3zM493 57h3v1h-3zM499 57h3v1h-3zM505 57h3v1h-3zM511 57h3v1h-3zM517 57h3v1h-3zM523 57h3v1h-3zM529 57h3v1h-3zM535 57h3v1h-3zM541 57h3v1h-3zM547 57h3v1h-3zM553 57h3v1h-3zM559 57h3v1h-3zM565 57h3v1h-3zM571 57h3v1h-3zM577 57h3v1h-3zM583 57h3v1h-3zM589 57h3v1h-3zM595 57h3v1h-3zM601 57h3v1h-3zM607 57h3v1h-3zM613 57h3v1h-3zM619 57h3v1h-3zM625 57h3v1h-3zM631 57h3v1h-3zM637 57h3v1h-3zM643 57h3v1h-3zM649 57h3v1h-3zM655 57h3v1h-3zM661 57h3v1h-3zM667 57h3v1h-3zM673 57h3v1h-3z"/>
<path fill="#778899" d="M13 92h3v1h-3zM19 92h3v1h-3zM25 92h3v1h-3zM31 92h3v1h-3zM37 92h3v1h-3zM43 92h3v1h-3zM49 92h3v1h-3zM55 92h3v1h-3zM61 92h3v1h-3zM67 92h3v1h-3zM73 92h3v1h-3zM79 92h3v1h-3zM85 92h3v1h-3zM91 92h3v1h-3zM97 92h3v1h-3zM103 92h3v1h-3zM109 92h3v1h-3zM115 92h3v1h-3zM121 92h3v1h-3zM127 92h3v1h-3zM133 92h3v1h-3zM139 92h3v1h-3zM145 92h3v1h-3zM151 92h3v1h-3zM157 92h3v1h-3zM163 92h3v1h-3zM169 92h3v1h-3zM175 92h3v1h-3zM181 92h3v1h-3zM187 92h3v1h-3zM193 92h3v1h-3zM199 92h3v1h-3zM205 92h3v1h-3zM211 92h3v1h-3zM217 92h3v1h-3zM223 92h3v1h-3zM229 92h3v1h-3zM235 92h3v1h-3zM241 92h3v1h-3zM247 92h3v1h-3zM253 92h3v1h-3zM259 92h3v1h-3zM265 92h3v1h-3zM271 92h3v1h-3zM277 92h3v1h-3zM283 92h3v1h-3zM289 92h3v1h-3zM295 92h3v1h-3zM301 92h3v1h-3zM307 92h3v1h-3zM313 92h3v1h-3zM319 92h3v1h-3zM325 92h3v1h-3zM331 92h3v1h-3zM337 92h3v1h-3zM343 92h3v1h-3zM349 92h3v1h-3zM355 92h3v1h-3zM361 92h3v1h-3zM367 92h3v1h-3zM373 92h3v1h-3zM379 92h3v1h-3zM385 92h3v1h-3zM391 92h3v1h-3zM397 92h3v1h-3zM403 92h3v1h-3zM409 92h3v1h-3zM415 92h3v1h-3zM421 92h3v1h-3zM427 92h3v1h-3zM433 92h3v1h-3zM439 92h3v1h-3zM445 92h3v1h-3zM451 92h3v1h-3zM457 92h3v1h-3zM463 92h3v1h-3zM469 92h3v1h-3zM475 92h3v1h-3zM481 92h3v1h-3zM487 92h3v1h-3zM493 92h3v1h-3zM499 92h3v1h-3zM505 92h3v1h-3zM511 92h3v1h-3zM517 92h3v1h-3zM523 92h3v1h-3zM529 92h3v1h-3zM535 92h3v1h-3zM541 92h3v1h-3zM547 92h3v1h-3zM553 92h3v1h-3zM559 92h3v1h-3zM565 92h3v1h-3zM571 92h3v1h-3zM577 92h3v1h-3zM583 92h3v1h-3zM589 92h3v1h-3zM595 92h3v1h-3zM601 92h3v1h-3zM607 92h3v1h-3zM613 92h3v1h-3zM619 92h3v1h-3zM625 92h3v1h-3zM631 92h3v1h-3zM637 92h3v1h-3zM643 92h3v1h-3zM649 92h3v1h-3zM655 92h3v1h-3zM661 92h3v1h-3zM667 92h3v1h-3zM673 92h3v1h-3z"/>
<path fill="#778899" d="M13 127h3v1h-3zM19 127h3v1h-3zM25 127h3v1h-3zM31 127h3v1h-3zM37 127h3v1h-3zM43 127h3v1h-3zM49 127h3v1h-3zM55 127h3v1h-3zM61 127h3v1h-3zM67 127h3v1h-3zM73 127h3v1h-3zM79 127h3v1h-3zM85 127h3v1h-3zM91 127h3v1h-3zM97 127h3v1h-3zM103 127h3v1h-3zM109 127h3v1h-3zM115 127h3v1h-3zM121 127h3v1h-3zM127 127h3v1h-3zM133 127h3v1h-3zM139 127h3v1h-3zM145 127h3v1h-3zM151 127h3v1h-3zM157 127h3v1h-3zM163 127h3v1h-3zM169 127h3v1h-3zM175 127h3v1h-3zM181 127h3v1h-3zM187 127h3v1h-3zM193 127h3v1h-3zM199 127h3v1h-3zM205 127h3v1h-3zM211 127h3v1h-3zM217 127h3v1h-3zM223 127h3v1h-3zM229 127h3v1h-3zM235 127h3v1h-3zM241 127h3v1h-3zM247 127h3v1h-3zM253 127h3v1h-3zM259 127h3v1h-3zM265 127h3v1h-3zM271 127h3v1h-3zM277 127h3v1h-3zM283 127h3v1h-3zM289 127h3v1h-3zM295 127h3v1h-3zM301 127h3v1h-3zM307 127h3v1h-3zM313 127h3v1h-3zM319 127h3v1h-3zM325 127h3v1h-3zM331 127h3v1h-3zM337 127h3v1h-3zM343 127h3v1h-3zM349 127h3v1h-3zM355 127h3v1h-3zM361 127h3v1h-3zM367 127h3v1h-3zM373 127h3v1h-3zM379 127h3v1h-3zM385 127h3v1h-3zM391 127h3v1h-3zM397 127h3v1h-3zM403 127h3v1h-3zM409 127h3v1h-3zM415 127h3v1h-3zM421 127h3v1h-3zM427 127h3v1h-3zM433 127h3v1h-3zM439 127h3v1h-3zM445 127h3v1h-3zM451 127h3v1h-3zM457 127h3v1h-3zM463 127h3v1h-3zM469 127h3v1h-3zM475 127h3v1h-3zM481 127h3v1h-3zM487 127h3v1h-3zM493 127h3v1h-3zM499 127h3v1h-3zM505 127h3v1h-3zM511 127h3v1h-3zM517 127h3v1h-3zM523 127h3v1h-3zM529 127h3v1h-3zM535 127h3v1h-3zM541 127h3v1h-3zM547 127h3v1h-3zM553 127h3v1h-3zM559 127h3v1h-3zM565 127h3v1h-3zM571 127h3v1h-3zM577 127h3v1h-3zM583 127h3v1h-3zM589 127h3v1h-3zM595 127h3v1h-3zM601 127h3v1h-3zM607 127h3v1h-3zM613 127h3v1h-3zM619 127h3v1h-3zM625 127h3v1h-3zM631 127h3v1h-3zM637 127h3v1h-3zM643 127h3v1h-3zM649 127h3v1h-3zM655 127h3v1h-3zM661 127h3v1h-3zM667 127h3v1h-3zM673 127h3v1h-3z"/>
<path fill="#778899" d="M13 162h3v1h-3zM19 162h3v1h-3zM25 162h3v1h-3zM31 162h3v1h-3zM37 162h3v1h-3zM43 162h3v1h-3zM49 162h3v1h-3zM55 162h3v1h-3zM61 162h3v1h-3zM67 162h3v1h-3zM73 162h3v1h-3zM79 162h3v1h-3zM85 162h3v1h-3zM91 162h3v1h-3zM97 162h3v1h-3zM103 162h3v1h-3zM109 162h3v1h-3zM115 162h3v1h-3zM121 162h3v1h-3zM127 162h3v1h-3zM133 162h3v1h-3zM139 162h3v1h-3zM145 162h3v1h-3zM151 162h3v1h-3zM157 162h3v1h-3zM163 162h3v1h-3zM169 162h3v1h-3zM175 162h3v1h-3zM181 162h3v1h-3zM187 162h3v1h-3zM193 162h3v1h-3zM199 162h3v1h-3zM205 162h3v1h-3zM211 162h3v1h-3zM217 162h3v1h-3zM223 162h3v1h-3zM229 162h3v1h-3zM235 162h3v1h-3zM241 162h3v1h-3zM247 162h3v1h-3zM253 162h3v1h-3zM259 162h3v1h-3zM265 162h3v1h-3zM271 162h3v1h-3zM277 162h3v1h-3zM283 162h3v1h-3zM289 162h3v1h-3zM295 162h3v1h-3zM301 162h3v1h-3zM307 162h3v1h-3zM313 162h3v1h-3zM319 162h3v1h-3zM325 162h3v1h-3zM331 162h3v1h-3zM337 162h3v1h-3zM343 162h3v1h-3zM349 162h3v1h-3zM355 162h3v1h-3zM361 162h3v1h-3zM367 162h3v1h-3zM373 162h3v1h-3zM379 162h3v1h-3zM385 162h3v1h-3zM391 162h3v1h-3zM397 162h3v1h-3zM403 162h3v1h-3zM409 162h3v1h-3zM415 162h3v1h-3zM421 162h3v1h-3zM427 162h3v1h-3zM433 162h3v1h-3zM439 162h3v1h-3zM445 162h3v1h-3zM451 162h3v1h-3zM457 162h3v1h-3zM463 162h3v1h-3zM469 162h3v1h-3zM475 162h3v1h-3zM481 162h3v1h-3zM487 162h3v1h-3zM493 162h3v1h-3zM499 162h3v1h-3zM505 162h3v1h-3zM511 162h3v1h-3zM517 162h3v1h-3zM523 162h3v1h-3zM529 162h3v1h-3zM535 162h3v1h-3zM541 162h3v1h-3zM547 162h3v1h-3zM553 162h3v1h-3zM559 162h3v1h-3zM565 162h3v1h-3zM571 162h3v1h-3zM577 162h3v1h-3zM583 162h3v1h-3zM589 162h3v1h-3zM595 162h3v1h-3zM601 162h3v1h-3zM607 162h3v1h-3zM613 162h3v1h-3zM619 162h3v1h-3zM625 162h3v1h-3zM631 162h3v1h-3zM637 162h3v1h-3zM643 162h3v1h-3zM649 162h3v1h-3zM655 162h3v1h-3zM661 162h3v1h-3zM667 162h3v1h-3zM673 162h3v1h-3z"/>
<path fill="#778899" d="M13 197h3v1h-3zM19 197h3v1h-3zM25 197h3v1h-3zM31 197h3v1h-3zM37 197h3v1h-3zM43 197h3v1h-3zM49 197h3v1h-3zM55 197h3v1h-3zM61 197h3v1h-3zM67 197h3v1h-3zM73 197h3v1h-3zM79 197h3v1h-3zM85 197h3v1h-3zM91 197h3v1h-3zM97 197h3v1h-3zM103 197h3v1h-3zM109 197h3v1h-3zM115 197h3v1h-3zM121 197h3v1h-3zM127 197h3v1h-3zM133 197h3v1h-3zM139 197h3v1h-3zM145 197h3v1h-3zM151 197h3v1h-3zM157 197h3v1h-3zM163 197h3v1h-3zM169 197h3v1h-3zM175 197h3v1h-3zM181 197h3v1h-3zM187 197h3v1h-3zM193 197h3v1h-3zM199 197h3v1h-3zM205 197h3v1h-3zM211 197h3v1h-3zM217 197h3v1h-3zM223 197h3v1h-3zM229 197h3v1h-3zM235 197h3v1h-3zM241 197h3v1h-3zM247 197h3v1h-3zM253 197h3v1h-3zM259 197h3v1h-3zM265 197h3v1h-3zM271 197h3v1h-3zM277 197h3v1h-3zM283 197h3v1h-3zM289 197h3v1h-3zM295 197h3v1h-3zM301 197h3v1h-3zM307 197h3v1h-3zM313 197h3v1h-3zM319 197h3v1h-3zM325 197h3v1h-3zM331 197h3v1h-3zM337 197h3v1h-3zM343 197h3v1h-3zM349 197h3v1h-3zM355 197h3v1h-3zM361 197h3v1h-3zM367 197h3v1h-3zM373 197h3v1h-3zM379 197h3v1h-3zM385 197h3v1h-3zM391 197h3v1h-3zM397 197h3v1h-3zM403 197h3v1h-3zM409 197h3v1h-3zM415 197h3v1h-3zM421 197h3v1h-3zM427 197h3v1h-3zM433 197h3v1h-3zM439 197h3v1h-3zM445 197h3v1h-3zM451 197h3v1h-3zM457 197h3v1h-3zM463 197h3v1h-3zM469 197h3v1h-3zM475 197h3v1h-3zM481 197h3v1h-3zM487 197h3v1h-3zM493 197h3v1h-3zM499 197h3v1h-3zM505 197h3v1h-3zM511 197h3v1h-3zM517 197h3v1h-3zM523 197h3v1h-3zM529 197h3v1h-3zM535 197h3v1h-3zM541 197h3v1h-3zM547 197h3v1h-3zM553 197h3v1h-3zM559 197h3v1h-3zM565 197h3v1h-3zM571 197h3v1h-3zM577 197h3v1h-3zM583 197h3v1h-3zM589 197h3v1h-3zM595 197h3v1h-3zM601 197h3v1h-3zM607 197h3v1h-3zM613 197h3v1h-3zM619 197h3v1h-3zM625 197h3v1h-3zM631 197h3v1h-3zM637 197h3v1h-3zM643 197h3v1h-3zM649 197h3v1h-3zM655 197h3v1h-3zM661 197h3v1h-3zM667 197h3v1h-3zM673 197h3v1h-3z"/>
<path fill="#778899" d="M13 232h3v1h-3zM19 232h3v1h-3zM25 232h3v1h-3zM31 232h3v1h-3zM37 232h3v1h-3zM43 232h3v1h-3zM49 232h3v1h-3zM55 232h3v1h-3zM61 232h3v1h-3zM67 232h3v1h-3zM73 232h3v1h-3zM79 232h3v1h-3zM85 232h3v1h-3zM91 232h3v1h-3zM97 232h3v1h-3zM103 232h3v1h-3zM109 232h3v1h-3zM115 232h3v1h-3zM121 232h3v1h-3zM127 232h3v1h-3zM133 232h3v1h-3zM139 232h3v1h-3zM145 232h3v1h-3zM151 232h3v1h-3zM157 232h3v1h-3zM163 232h3v1h-3zM169 232h3v1h-3zM175 232h3v1h-3zM181 232h3v1h-3zM187 232h3v1h-3zM193 232h3v1h-3zM199 232h3v1h-3zM205 232h3v1h-3zM211 232h3v1h-3zM217 232h3v1h-3zM223 232h3v1h-3zM229 232h3v1h-3zM235 232h3v1h-3zM241 232h3v1h-3zM247 232h3v1h-3zM253 232h3v1h-3zM259 232h3v1h-3zM265 232h3v1h-3zM271 232h3v1h-3zM277 232h3v1h-3zM283 232h3v1h-3zM289 232h3v1h-3zM295 232h3v1h-3zM301 232h3v1h-3zM307 232h3v1h-3zM313 232h3v1h-3zM319 232h3v1h-3zM325 232h3v1h-3zM331 232h3v1h-3zM337 232h3v1h-3zM343 232h3v1h-3zM349 232h3v1h-3zM355 232h3v1h-3zM361 232h3v1h-3zM367 232h3v1h-3zM373 232h3v1h-3zM379 232h3v1h-3zM385 232h3v1h-3zM391 232h3v1h-3zM397 232h3v1h-3zM403 232h3v1h-3zM409 232h3v1h-3zM415 232h3v1h-3zM421 232h3v1h-3zM427 232h3v1h-3zM433 232h3v1h-3zM439 232h3v1h-3zM445 232h3v1h-3zM451 232h3v1h-3zM457 232h3v1h-3zM463 232h3v1h-3zM469 232h3v1h-3zM475 232h3v1h-3zM481 232h3v1h-3zM487 232h3v1h-3zM493 232h3v1h-3zM499 232h3v1h-3zM505 232h3v1h-3zM511 232h3v1h-3zM517 232h3v1h-3zM523 232h3v1h-3zM529 232h3v1h-3zM535 232h3v1h-3zM541 232h3v1h-3zM547 232h3v1h-3zM553 232h3v1h-3zM559 232h3v1h-3zM565 232h3v1h-3zM571 232h3v1h-3zM577 232h3v1h-3zM583 232h3v1h-3zM589 232h3v1h-3zM595 232h3v1h-3zM601 232h3v1h-3zM607 232h3v1h-3zM613 232h3v1h-3zM619 232h3v1h-3zM625 232h3v1h-3zM631 232h3v1h-3zM637 232h3v1h-3zM643 232h3v1h-3zM649 232h3v1h-3zM655 232h3v1h-3zM661 232h3v1h-3zM667 232h3v1h-3zM673 232h3v1h-3z"/>
<path fill="#778899" d="M13 267h3v1h-3zM19 267h3v1h-3zM25 267h3v1h-3zM31 267h3v1h-3zM37 267h3v1h-3zM43 267h3v1h-3zM49 267h3v1h-3zM55 267h3v1h-3zM61 267h3v1h-3zM67 267h3v1h-3zM73 267h3v1h-3zM79 267h3v1h-3zM85 267h3v1h-3zM91 267h3v1h-3zM97 267h3v1h-3zM103 267h3v1h-3zM109 267h3v1h-3zM115 267h3v1h-3zM121 267h3v1h-3zM127 267h3v1h-3zM133 267h3v1h-3zM139 267h3v1h-3zM145 267h3v1h-3zM151 267h3v1h-3zM157 267h3v1h-3zM163 267h3v1h-3zM169 267h3v1h-3zM175 267h3v1h-3zM181 267h3v1h-3zM187 267h3v1h-3zM193 267h3v1h-3zM199 267h3v1h-3zM205 267h3v1h-3zM211 267h3v1h-3zM217 267h3v1h-3zM223 267h3v1h-3zM229 267h3v1h-3zM235 267h3v1h-3zM241 267h3v1h-3zM247 267h3v1h-3zM253 267h3v1h-3zM259 267h3v1h-3zM265 267h3v1h-3zM271 267h3v1h-3zM277 267h3v1h-3zM283 267h3v1h-3zM289 267h3v1h-3zM295 267h3v1h-3zM301 267h3v1h-3zM307 267h3v1h-3zM313 267h3v1h-3zM319 267h3v1h-3zM325 267h3v1h-3zM331 267h3v1h-3zM337 267h3v1h-3zM343 267h3v1h-3zM349 267h3v1h-3zM355 267h3v1h-3zM361 267h3v1h-3zM367 267h3v1h-3zM373 267h3v1h-3zM379 267h3v1h-3zM385 267h3v1h-3zM391 267h3v1h-3zM397 267h3v1h-3zM403 267h3v1h-3zM409 267h3v1h-3zM415 267h3v1h-3zM421 267h3v1h-3zM427 267h3v1h-3zM433 267h3v1h-3zM439 267h3v1h-3zM445 267h3v1h-3zM451 267h3v1h-3zM457 267h3v1h-3zM463 267h3v1h-3zM469 267h3v1h-3zM475 267h3v1h-3zM481 267h3v1h-3zM487 267h3v1h-3zM493 267h3v1h-3zM499 267h3v1h-3zM505 267h3v1h-3zM511 267h3v1h-3zM517 267h3v1h-3zM523 267h3v1h-3zM529 267h3v1h-3zM535 267h3v1h-3zM541 267h3v1h-3zM547 267h3v1h-3zM553 267h3v1h-3zM559 267h3v1h-3zM565 267h3v1h-3zM571 267h3v1h-3zM577 267h3v1h-3zM583 267h3v1h-3zM589 267h3v1h-3zM595 267h3v1h-3zM601 267h3v1h-3zM607 267h3v1h-3zM613 267h3v1h-3zM619 267h3v1h-3zM625 267h3v1h-3zM631 267h3v1h-3zM637 267h3v1h-3zM643 267h3v1h-3zM649 267h3v1h-3zM655 267h3v1h-3zM661 267h3v1h-3zM667 267h3v1h-3zM673 267h3v1h-3z"/>
<path fill="#778899" d="M13 302h3v1h-3zM19 302h3v1h-3zM25 302h3v1h-3zM31 302h3v1h-3zM37 302h3v1h-3zM43 302h3v1h-3zM49 302h3v1h-3zM55 302h3v1h-3zM61 302h3v1h-3zM67 302h3v1h-3zM73 302h3v1h-3zM79 302h3v1h-3zM85 302h3v1h-3zM91 302h3v1h-3zM97 302h3v1h-3zM103 302h3v1h-3zM109 302h3v1h-3zM115 302h3v1h-3zM121 302h3v1h-3zM127 302h3v1h-3zM133 302h3v1h-3zM139 302h3v1h-3zM145 302h3v1h-3zM151 302h3v1h-3zM157 302h3v1h-3zM163 302h3v1h-3zM169 302h3v1h-3zM175 302h3v1h-3zM181 302h3v1h-3zM187 302h3v1h-3zM193 302h3v1h-3zM199 302h3v1h-3zM205 302h3v1h-3zM211 302h3v1h-3zM217 302h3v1h-3zM223 302h3v1h-3zM229 302h3v1h-3zM235 302h3v1h-3zM241 302h3v1h-3zM247 302h3v1h-3zM253 302h3v1h-3zM259 302h3v1h-3zM265 302h3v1h-3zM271 302h3v1h-3zM277 302h3v1h-3zM283 302h3v1h-3zM289 302h3v1h-3zM295 302h3v1h-3zM301 302h3v1h-3zM307 302h3v1h-3zM313 302h3v1h-3zM319 302h3v1h-3zM325 302h3v1h-3zM331 302h3v1h-3zM337 302h3v1h-3zM343 302h3v1h-3zM349 302h3v1h-3zM355 302h3v1h-3zM361 302h3v1h-3zM367 302h3v1h-3zM373 302h3v1h-3zM379 302h3v1h-3zM385 302h3v1h-3zM391 302h3v1h-3zM397 302h3v1h-3zM403 302h3v1h-3zM409 302h3v1h-3zM415 302h3v1h-3zM421 302h3v1h-3zM427 302h3v1h-3zM433 302h3v1h-3zM439 302h3v1h-3zM445 302h3v1h-3zM451 302h3v1h-3zM457 302h3v1h-3zM463 302h3v1h-3zM469 302h3v1h-3zM475 302h3v1h-3zM481 302h3v1h-3zM487 302h3v1h-3zM493 302h3v1h-3zM499 302h3v1h-3zM505 302h3v1h-3zM511 302h3v1h-3zM517 302h3v1h-3zM523 302h3v1h-3zM529 302h3v1h-3zM535 302h3v1h-3zM541 302h3v1h-3zM547 302h3v1h-3zM553 302h3v1h-3zM559 302h3v1h-3zM565 302h3v1h-3zM571 302h3v1h-3zM577 302h3v1h-3zM583 302h3v1h-3zM589 302h3v1h-3zM595 302h3v1h-3zM601 302h3v1h-3zM607 302h3v1h-3zM613 302h3v1h-3zM619 302h3v1h-3zM625 302h3v1h-3zM631 302h3v1h-3zM637 302h3v1h-3zM643 302h3v1h-3zM649 302h3v1h-3zM655 302h3v1h-3zM661 302h3v1h-3zM667 302h3v1h-3zM673 302h3v1h-3z"/>
<path fill="#778899" d="M13 337h3v1h-3zM19 337h3v1h-3zM25 337h3v1h-3zM31 337h3v1h-3zM37 337h3v1h-3zM43 337h3v1h-3zM49 337h3v1h-3zM55 337h3v1h-3zM61 337h3v1h-3zM67 337h3v1h-3zM73 337h3v1h-3zM79 337h3v1h-3zM85 337h3v1h-3zM91 337h3v1h-3zM97 337h3v1h-3zM103 337h3v1h-3zM109 337h3v1h-3zM115 337h3v1h-3zM121 337h3v1h-3zM127 337h3v1h-3zM133 337h3v1h-3zM139 337h3v1h-3zM145 337h3v1h-3zM151 337h3v1h-3zM157 337h3v1h-3zM163 337h3v1h-3zM169 337h3v1h-3zM175 337h3v1h-3zM181 337h3v1h-3zM187 337h3v1h-3zM193 337h3v1h-3zM199 337h3v1h-3zM205 337h3v1h-3zM211 337h3v1h-3zM217 337h3v1h-3zM223 337h3v1h-3zM229 337h3v1h-3zM235 337h3v1h-3zM241 337h3v1h-3zM247 337h3v1h-3zM253 337h3v1h-3zM259 337h3v1h-3zM265 337h3v1h-3zM271 337h3v1h-3zM277 337h3v1h-3zM283 337h3v1h-3zM289 337h3v1h-3zM295 337h3v1h-3zM301 337h3v1h-3zM307 337h3v1h-3zM313 337h3v1h-3zM319 337h3v1h-3zM325 337h3v1h-3zM331 337h3v1h-3zM337 337h3v1h-3zM343 337h3v1h-3zM349 337h3v1h-3zM355 337h3v1h-3zM361 337h3v1h-3zM367 337h3v1h-3zM373 337h3v1h-3zM379 337h3v1h-3zM385 337h3v1h-3zM391 337h3v1h-3zM397 337h3v1h-3zM403 337h3v1h-3zM409 337h3v1h-3zM415 337h3v1h-3zM421 337h3v1h-3zM427 337h3v1h-3zM433 337h3v1h-3zM439 337h3v1h-3zM445 337h3v1h-3zM451 337h3v1h-3zM457 337h3v1h-3zM463 337h3v1h-3zM469 337h3v1h-3zM475 337h3v1h-3zM481 337h3v1h-3zM487 337h3v1h-3zM493 337h3v1h-3zM499 337h3v1h-3zM505 337h3v1h-3zM511 337h3v1h-3zM517 337h3v1h-3zM523 337h3v1h-3zM529 337h3v1h-3zM535 337h3v1h-3zM541 337h3v1h-3zM547 337h3v1h-3zM553 337h3v1h-3zM559 337h3v1h-3zM565 337h3v1h-3zM571 337h3v1h-3zM577 337h3v1h-3zM583 337h3v1h-3zM589 337h3v1h-3zM595 337h3v1h-3zM601 337h3v1h-3zM607 337h3v1h-3zM613 337h3v1h-3zM619 337h3v1h-3zM625 337h3v1h-3zM631 337h3v1h-3zM637 337h3v1h-3zM643 337h3v1h-3zM649 337h3v1h-3zM655 337h3v1h-3zM661 337h3v1h-3zM667 337h3v1h-3zM673 337h3v1h-3z"/>
<path fill="#778899" d="M13 372h3v1h-3zM19 372h3v1h-3zM25 372h3v1h-3zM31 372h3v1h-3zM37 372h3v1h-3zM43 372h3v1h-3zM49 372h3v1h-3zM55 372h3v1h-3zM61 372h3v1h-3zM67 372h3v1h-3zM73 372h3v1h-3zM79 372h3v1h-3zM85 372h3v1h-3zM91 372h3v1h-3zM97 372h3v1h-3zM103 372h3v1h-3zM109 372h3v1h-3zM115 372h3v1h-3zM121 372h3v1h-3zM127 372h3v1h-3zM133 372h3v1h-3zM139 372h3v1h-3zM145 372h3v1h-3zM151 372h3v1h-3zM157 372h3v1h-3zM163 372h3v1h-3zM169 372h3v1h-3zM175 372h3v1h-3zM181 372h3v1h-3zM187 372h3v1h-3zM193 372h3v1h-3zM199 372h3v1h-3zM205 372h3v1h-3zM211 372h3v1h-3zM217 372h3v1h-3zM223 372h3v1h-3zM229 372h3v1h-3zM235 372h3v1h-3zM241 372h3v1h-3zM247 372h3v1h-3zM253 372h3v1h-3zM259 372h3v1h-3zM265 372h3v1h-3zM271 372h3v1h-3zM277 372h3v1h-3zM283 372h3v1h-3zM289 372h3v1h-3zM295 372h3v1h-3zM301 372h3v1h-3zM307 372h3v1h-3zM313 372h3v1h-3zM319 372h3v1h-3zM325 372h3v1h-3zM331 372h3v1h-3zM337 372h3v1h-3zM343 372h3v1h-3zM349 372h3v1h-3zM355 372h3v1h-3zM361 372h3v1h-3zM367 372h3v1h-3zM373 372h3v1h-3zM379 372h3v1h-3zM385 372h3v1h-3zM391 372h3v1h-3zM397 372h3v1h-3zM403 372h3v1h-3zM409 372h3v1h-3zM415 372h3v1h-3zM421 372h3v1h-3zM427 372h3v1h-3zM433 372h3v1h-3zM439 372h3v1h-3zM445 372h3v1h-3zM451 372h3v1h-3zM457 372h3v1h-3zM463 372h3v1h-3zM469 372h3v1h-3zM475 372h3v1h-3zM481 372h3v1h-3zM487 372h3v1h-3zM493 372h3v1h-3zM499 372h3v1h-3zM505 372h3v1h-3zM511 372h3v1h-3zM517 372h3v1h-3zM523 372h3v1h-3zM529 372h3v1h-3zM535 372h3v1h-3zM541 372h3v1h-3zM547 372h3v1h-3zM553 372h3v1h-3zM559 372h3v1h-3zM565 372h3v1h-3zM571 372h3v1h-3zM577 372h3v1h-3zM583 372h3v1h-3zM589 372h3v1h-3zM595 372h3v1h-3zM601 372h3v1h-3zM607 372h3v1h-3zM613 372h3v1h-3zM619 372h3v1h-3zM625 372h3v1h-3zM631 372h3v1h-3zM637 372h3v1h-3zM643 372h3v1h-3zM649 372h3v1h-3zM655 372h3v1h-3zM661 372h3v1h-3zM667 372h3v1h-3zM673 372h3v1h-3z"/>
<path fill="#778899" d="M13 474h3v1h-3zM19 474h3v1h-3zM25 474h3v1h-3zM31 474h3v1h-3zM37 474h3v1h-3zM43 474h3v1h-3zM49 474h3v1h-3zM55 474h3v1h-3zM61 474h3v1h-3zM67 474h3v1h-3zM73 474h3v1h-3zM79 474h3v1h-3zM85 474h3v1h-3zM91 474h3v1h-3zM97 474h3v1h-3zM103 474h3v1h-3zM109 474h3v1h-3zM115 474h3v1h-3zM121 474h3v1h-3zM127 474h3v1h-3zM133 474h3v1h-3zM139 474h3v1h-3zM145 474h3v1h-3zM151 474h3v1h-3zM157 474h3v1h-3zM163 474h3v1h-3zM169 474h3v1h-3zM175 474h3v1h-3zM181 474h3v1h-3zM187 474h3v1h-3zM193 474h3v1h-3zM199 474h3v1h-3zM205 474h3v1h-3zM211 474h3v1h-3zM217 474h3v1h-3zM223 474h3v1h-3zM229 474h3v1h-3zM235 474h3v1h-3zM241 474h3v1h-3zM247 474h3v1h-3zM253 474h3v1h-3zM259 474h3v1h-3zM265 474h3v1h-3zM271 474h3v1h-3zM277 474h3v1h-3zM283 474h3v1h-3zM289 474h3v1h-3zM295 474h3v1h-3zM301 474h3v1h-3zM307 474h3v1h-3zM313 474h3v1h-3zM319 474h3v1h-3zM325 474h3v1h-3zM331 474h3v1h-3zM337 474h3v1h-3zM343 474h3v1h-3zM349 474h3v1h-3zM355 474h3v1h-3zM361 474h3v1h-3zM367 474h3v1h-3zM373 474h3v1h-3zM379 474h3v1h-3zM385 474h3v1h-3zM391 474h3v1h-3zM397 474h3v1h-3zM403 474h3v1h-3zM409 474h3v1h-3zM415 474h3v1h-3zM421 474h3v1h-3zM427 474h3v1h-3zM433 474h3v1h-3zM439 474h3v1h-3zM445 474h3v1h-3zM451 474h3v1h-3zM457 474h3v1h-3zM463 474h3v1h-3zM469 474h3v1h-3zM475 474h3v1h-3zM481 474h3v1h-3zM487 474h3v1h-3zM493 474h3v1h-3zM499 474h3v1h-3zM505 474h3v1h-3zM511 474h3v1h-3zM517 474h3v1h-3zM523 474h3v1h-3zM529 474h3v1h-3zM535 474h3v1h-3zM541 474h3v1h-3zM547 474h3v1h-3zM553 474h3v1h-3zM559 474h3v1h-3zM565 474h3v1h-3zM571 474h3v1h-3zM577 474h3v1h-3zM583 474h3v1h-3zM589 474h3v1h-3zM595 474h3v1h-3zM601 474h3v1h-3zM607 474h3v1h-3zM613 474h3v1h-3zM619 474h3v1h-3zM625 474h3v1h-3zM631 474h3v1h-3zM637 474h3v1h-3zM643 474h3v1h-3zM649 474h3v1h-3zM655 474h3v1h-3zM661 474h3v1h-3zM667 474h3v1h-3zM673 474h3v1h-3z"/>
<path fill="#c0c0c0" d="M13 396h3v1h-3zM19 396h3v1h-3zM25 396h3v1h-3zM31 396h3v1h-3zM37 396h3v1h-3zM43 396h3v1h-3zM49 396h3v1h-3zM55 396h3v1h-3zM61 396h3v1h-3zM67 396h3v1h-3zM73 396h3v1h-3zM79 396h3v1h-3zM85 396h3v1h-3zM91 396h3v1h-3zM97 396h3v1h-3zM103 396h3v1h-3zM109 396h3v1h-3zM115 396h3v1h-3zM121 396h3v1h-3zM127 396h3v1h-3zM133 396h3v1h-3zM139 396h3v1h-3zM145 396h3v1h-3zM151 396h3v1h-3zM157 396h3v1h-3zM163 396h3v1h-3zM169 396h3v1h-3zM175 396h3v1h-3zM181 396h3v1h-3zM187 396h3v1h-3zM193 396h3v1h-3zM199 396h3v1h-3zM205 396h3v1h-3zM211 396h3v1h-3zM217 396h3v1h-3zM223 396h3v1h-3zM229 396h3v1h-3zM235 396h3v1h-3zM241 396h3v1h-3zM247 396h3v1h-3zM253 396h3v1h-3zM259 396h3v1h-3zM265 396h3v1h-3zM271 396h3v1h-3zM277 396h3v1h-3zM283 396h3v1h-3zM289 396h3v1h-3zM295 396h3v1h-3zM301 396h3v1h-3zM307 396h3v1h-3zM313 396h3v1h-3zM319 396h3v1h-3zM325 396h3v1h-3zM331 396h3v1h-3zM337 396h3v1h-3zM343 396h3v1h-3zM349 396h3v1h-3zM355 396h3v1h-3zM361 396h3v1h-3zM367 396h3v1h-3zM373 396h3v1h-3zM379 396h3v1h-3zM385 396h3v1h-3zM391 396h3v1h-3zM397 396h3v1h-3zM403 396h3v1h-3zM409 396h3v1h-3zM415 396h3v1h-3zM421 396h3v1h-3zM427 396h3v1h-3zM433 396h3v1h-3zM439 396h3v1h-3zM445 396h3v1h-3zM451 396h3v1h-3zM457 396h3v1h-3zM463 396h3v1h-3zM469 396h3v1h-3zM475 396h3v1h-3zM481 396h3v1h-3zM487 396h3v1h-3zM493 396h3v1h-3zM499 396h3v1h-3zM505 396h3v1h-3zM511 396h3v1h-3zM517 396h3v1h-3zM523 396h3v1h-3zM529 396h3v1h-3zM535 396h3v1h-3zM541 396h3v1h-3zM547 396h3v1h-3zM553 396h3v1h-3zM559 396h3v1h-3zM565 396h3v1h-3zM571 396h3v1h-3zM577 396h3v1h-3zM583 396h3v1h-3zM589 396h3v1h-3zM595 396h3v1h-3zM601 396h3v1h-3zM607 396h3v1h-3zM613 396h3v1h-3zM619 396h3v1h-3zM625 396h3v1h-3zM631 396h3v1h-3zM637 396h3v1h-3zM643 396h3v1h-3zM649 396h3v1h-3zM655 396h3v1h-3zM661 396h3v1h-3zM667 396h3v1h-3zM673 396h3v1h-3zM679 396h1v1h-1z"/>
<path fill="#c0c0c0" d="M13 412h3v1h-3zM19 412h3v1h-3zM25 412h3v1h-3zM31 412h3v1h-3zM37 412h3v1h-3zM43 412h3v1h-3zM49 412h3v1h-3zM55 412h3v1h-3zM61 412h3v1h-3zM67 412h3v1h-3zM73 412h3v1h-3zM79 412h3v1h-3zM85 412h3v1h-3zM91 412h3v1h-3zM97 412h3v1h-3zM103 412h3v1h-3zM109 412h3v1h-3zM115 412h3v1h-3zM121 412h3v1h-3zM127 412h3v1h-3zM133 412h3v1h-3zM139 412h3v1h-3zM145 412h3v1h-3zM151 412h3v1h-3zM157 412h3v1h-3zM163 412h3v1h-3zM169 412h3v1h-3zM175 412h3v1h-3zM181 412h3v1h-3zM187 412h3v1h-3zM193 412h3v1h-3zM199 412h3v1h-3zM205 412h3v1h-3zM211 412h3v1h-3zM217 412h3v1h-3zM223 412h3v1h-3zM229 412h3v1h-3zM235 412h3v1h-3zM241 412h3v1h-3zM247 412h3v1h-3zM253 412h3v1h-3zM259 412h3v1h-3zM265 412h3v1h-3zM271 412h3v1h-3zM277 412h3v1h-3zM283 412h3v1h-3zM289 412h3v1h-3zM295 412h3v1h-3zM301 412h3v1h-3zM307 412h3v1h-3zM313 412h3v1h-3zM319 412h3v1h-3zM325 412h3v1h-3zM331 412h3v1h-3zM337 412h3v1h-3zM343 412h3v1h-3zM349 412h3v1h-3zM355 412h3v1h-3zM361 412h3v1h-3zM367 412h3v1h-3zM373 412h3v1h-3zM379 412h3v1h-3zM385 412h3v1h-3zM391 412h3v1h-3zM397 412h3v1h-3zM403 412h3v1h-3zM409 412h3v1h-3zM415 412h3v1h-3zM421 412h3v1h-3zM427 412h3v1h-3zM433 412h3v1h-3zM439 412h3v1h-3zM445 412h3v1h-3zM451 412h3v1h-3zM457 412h3v1h-3zM463 412h3v1h-3zM469 412h3v1h-3zM475 412h3v1h-3zM481 412h3v1h-3zM487 412h3v1h-3zM493 412h3v1h-3zM499 412h3v1h-3zM505 412h3v1h-3zM511 412h3v1h-3zM517 412h3v1h-3zM523 412h3v1h-3zM529 412h3v1h-3zM535 412h3v1h-3zM541 412h3v1h-3zM547 412h3v1h-3zM553 412h3v1h-3zM559 412h3v1h-3zM565 412h3v1h-3zM571 412h3v1h-3zM577 412h3v1h-3zM583 412h3v1h-3zM589 412h3v1h-3zM595 412h3v1h-3zM601 412h3v1h-3zM607 412h3v1h-3zM613 412h3v1h-3zM619 412h3v1h-3zM625 412h3v1h-3zM631 412h3v1h-3zM637 412h3v1h-3zM643 412h3v1h-3zM649 412h3v1h-3zM655 412h3v1h-3zM661 412h3v1h-3zM667 412h3v1h-3zM673 412h3v1h-3zM679 412h1v1h-1z"/>
<path fill="#c0c0c0" d="M13 435h3v1h-3zM19 435h3v1h-3zM25 435h3v1h-3zM31 435h3v1h-3zM37 435h3v1h-3zM43 435h3v1h-3zM49 435h3v1h-3zM55 435h3v1h-3zM61 435h3v1h-3zM67 435h3v1h-3zM73 435h3v1h-3zM79 435h3v1h-3zM85 435h3v1h-3zM91 435h3v1h-3zM97 435h3v1h-3zM103 435h3v1h-3zM109 435h3v1h-3zM115 435h3v1h-3zM121 435h3v1h-3zM127 435h3v1h-3zM133 435h3v1h-3zM139 435h3v1h-3zM145 435h3v1h-3zM151 435h3v1h-3zM157 435h3v1h-3zM163 435h3v1h-3zM169 435h3v1h-3zM175 435h3v1h-3zM181 435h3v1h-3zM187 435h3v1h-3zM193 435h3v1h-3zM199 435h3v1h-3zM205 435h3v1h-3zM211 435h3v1h-3zM217 435h3v1h-3zM223 435h3v1h-3zM229 435h3v1h-3zM235 435h3v1h-3zM241 435h3v1h-3zM247 435h3v1h-3zM253 435h3v1h-3zM259 435h3v1h-3zM265 435h3v1h-3zM271 435h3v1h-3zM277 435h3v1h-3zM283 435h3v1h-3zM289 435h3v1h-3zM295 435h3v1h-3zM301 435h3v1h-3zM307 435h3v1h-3zM313 435h3v1h-3zM319 435h3v1h-3zM325 435h3v1h-3zM331 435h3v1h-3zM337 435h3v1h-3zM343 435h3v1h-3zM349 435h3v1h-3zM355 435h3v1h-3zM361 435h3v1h-3zM367 435h3v1h-3zM373 435h3v1h-3zM379 435h3v1h-3zM385 435h3v1h-3zM391 435h3v1h-3zM397 435h3v1h-3zM403 435h3v1h-3zM409 435h3v1h-3zM415 435h3v1h-3zM421 435h3v1h-3zM427 435h3v1h-3zM433 435h3v1h-3zM439 435h3v1h-3zM445 435h3v1h-3zM451 435h3v1h-3zM457 435h3v1h-3zM463 435h3v1h-3zM469 435h3v1h-3zM475 435h3v1h-3zM481 435h3v1h-3zM487 435h3v1h-3zM493 435h3v1h-3zM499 435h3v1h-3zM505 435h3v1h-3zM511 435h3v1h-3zM517 435h3v1h-3zM523 435h3v1h-3zM529 435h3v1h-3zM535 435h3v1h-3zM541 435h3v1h-3zM547 435h3v1h-3zM553 435h3v1h-3zM559 435h3v1h-3zM565 435h3v1h-3zM571 435h3v1h-3zM577 435h3v1h-3zM583 435h3v1h-3zM589 435h3v1h-3zM595 435h3v1h-3zM601 435h3v1h-3zM607 435h3v1h-3zM613 435h3v1h-3zM619 435h3v1h-3zM625 435h3v1h-3zM631 435h3v1h-3zM637 435h3v1h-3zM643 435h3v1h-3zM649 435h3v1h-3zM655 435h3v1h-3zM661 435h3v1h-3zM667 435h3v1h-3zM673 435h3v1h-3zM679 435h1v1h-1z"/>
<path fill="#c0c0c0" d="M13 513h3v1h-3zM19 513h3v1h-3zM25 513h3v1h-3zM31 513h3v1h-3zM37 513h3v1h-3zM43 513h3v1h-3zM49 513h3v1h-3zM55 513h3v1h-3zM61 513h3v1h-3zM67 513h3v1h-3zM73 513h3v1h-3zM79 513h3v1h-3zM85 513h3v1h-3zM91 513h3v1h-3zM97 513h3v1h-3zM103 513h3v1h-3zM109 513h3v1h-3zM115 513h3v1h-3zM121 513h3v1h-3zM127 513h3v1h-3zM133 513h3v1h-3zM139 513h3v1h-3zM145 513h3v1h-3zM151 513h3v1h-3zM157 513h3v1h-3zM163 513h3v1h-3zM169 513h3v1h-3zM175 513h3v1h-3zM181 513h3v1h-3zM187 513h3v1h-3zM193 513h3v1h-3zM199 513h3v1h-3zM205 513h3v1h-3zM211 513h3v1h-3zM217 513h3v1h-3zM223 513h3v1h-3zM229 513h3v1h-3zM235 513h3v1h-3zM241 513h3v1h-3zM247 513h3v1h-3zM253 513h3v1h-3zM259 513h3v1h-3zM265 513h3v1h-3zM271 513h3v1h-3zM277 513h3v1h-3zM283 513h3v1h-3zM289 513h3v1h-3zM295 513h3v1h-3zM301 513h3v1h-3zM307 513h3v1h-3zM313 513h3v1h-3zM319 513h3v1h-3zM325 513h3v1h-3zM331 513h3v1h-3zM337 513h3v1h-3zM343 513h3v1h-3zM349 513h3v1h-3zM355 513h3v1h-3zM361 513h3v1h-3zM367 513h3v1h-3zM373 513h3v1h-3zM379 513h3v1h-3zM385 513h3v1h-3zM391 513h3v1h-3zM397 513h3v1h-3zM403 513h3v1h-3zM409 513h3v1h-3zM415 513h3v1h-3zM421 513h3v1h-3zM427 513h3v1h-3zM433 513h3v1h-3zM439 513h3v1h-3zM445 513h3v1h-3zM451 513h3v1h-3zM457 513h3v1h-3zM463 513h3v1h-3zM469 513h3v1h-3zM475 513h3v1h-3zM481 513h3v1h-3zM487 513h3v1h-3zM493 513h3v1h-3zM499 513h3v1h-3zM505 513h3v1h-3zM511 513h3v1h-3zM517 513h3v1h-3zM523 513h3v1h-3zM529 513h3v1h-3zM535 513h3v1h-3zM541 513h3v1h-3zM547 513h3v1h-3zM553 513h3v1h-3zM559 513h3v1h-3zM565 513h3v1h-3zM571 513h3v1h-3zM577 513h3v1h-3zM583 513h3v1h-3zM589 513h3v1h-3zM595 513h3v1h-3zM601 513h3v1h-3zM607 513h3v1h-3zM613 513h3v1h-3zM619 513h3v1h-3zM625 513h3v1h-3zM631 513h3v1h-3zM637 513h3v1h-3zM643 513h3v1h-3zM649 513h3v1h-3zM655 513h3v1h-3zM661 513h3v1h-3zM667 513h3v1h-3zM673 513h3v1h-3zM679 513h1v1h-1z"/>
<path fill="#c0c0c0" d="M13 536h3v1h-3zM19 536h3v1h-3zM25 536h3v1h-3zM31 536h3v1h-3zM37 536h3v1h-3zM43 536h3v1h-3zM49 536h3v1h-3zM55 536h3v1h-3zM61 536h3v1h-3zM67 536h3v1h-3zM73 536h3v1h-3zM79 536h3v1h-3zM85 536h3v1h-3zM91 536h3v1h-3zM97 536h3v1h-3zM103 536h3v1h-3zM109 536h3v1h-3zM115 536h3v1h-3zM121 536h3v1h-3zM127 536h3v1h-3zM133 536h3v1h-3zM139 536h3v1h-3zM145 536h3v1h-3zM151 536h3v1h-3zM157 536h3v1h-3zM163 536h3v1h-3zM169 536h3v1h-3zM175 536h3v1h-3zM181 536h3v1h-3zM187 536h3v1h-3zM193 536h3v1h-3zM199 536h3v1h-3zM205 536h3v1h-3zM211 536h3v1h-3zM217 536h3v1h-3zM223 536h3v1h-3zM229 536h3v1h-3zM235 536h3v1h-3zM241 536h3v1h-3zM247 536h3v1h-3zM253 536h3v1h-3zM259 536h3v1h-3zM265 536h3v1h-3zM271 536h3v1h-3zM277 536h3v1h-3zM283 536h3v1h-3zM289 536h3v1h-3zM295 536h3v1h-3zM301 536h3v1h-3zM307 536h3v1h-3zM313 536h3v1h-3zM319 536h3v1h-3zM325 536h3v1h-3zM331 536h3v1h-3zM337 536h3v1h-3zM343 536h3v1h-3zM349 536h3v1h-3zM355 536h3v1h-3zM361 536h3v1h-3zM367 536h3v1h-3zM373 536h3v1h-3zM379 536h3v1h-3zM385 536h3v1h-3zM391 536h3v1h-3zM397 536h3v1h-3zM403 536h3v1h-3zM409 536h3v1h-3zM415 536h3v1h-3zM421 536h3v1h-3zM427 536h3v1h-3zM433 536h3v1h-3zM439 536h3v1h-3zM445 536h3v1h-3zM451 536h3v1h-3zM457 536h3v1h-3zM463 536h3v1h-3zM469 536h3v1h-3zM475 536h3v1h-3zM481 536h3v1h-3zM487 536h3v1h-3zM493 536h3v1h-3zM499 536h3v1h-3zM505 536h3v1h-3zM511 536h3v1h-3zM517 536h3v1h-3zM523 536h3v1h-3zM529 536h3v1h-3zM535 536h3v1h-3zM541 536h3v1h-3zM547 536h3v1h-3zM553 536h3v1h-3zM559 536h3v1h-3zM565 536h3v1h-3zM571 536h3v1h-3zM577 536h3v1h-3zM583 536h3v1h-3zM589 536h3v1h-3zM595 536h3v1h-3zM601 536h3v1h-3zM607 536h3v1h-3zM613 536h3v1h-3zM619 536h3v1h-3zM625 536h3v1h-3zM631 536h3v1h-3zM637 536h3v1h-3zM643 536h3v1h-3zM649 536h3v1h-3zM655 536h3v1h-3zM661 536h3v1h-3zM667 536h3v1h-3zM673 536h3v1h-3zM679 536h1v1h-1z"/>
</g>
<g id="candles">
<rect x="12" y="258" width="1" height="79" fill="#00ff00"/>
<rect x="10" y="261" width="5" height="52" fill="#00ff00"/>
<rect x="11" y="262" width="3" height="50" fill="#fff"/>
<rect x="20" y="283" width="1" height="57" fill="#00ff00"/>
<rect x="18" y="293" width="5" height="19" fill="#00ff00"/>
<rect x="19" y="294" width="3" height="17" fill="#000"/>
<rect x="28" y="274" width="1" height="27" fill="#00ff00"/>
<rect x="26" y="291" width="5" height="5" fill="#00ff00"/>
<rect x="27" y="292" width="3" height="3" fill="#fff"/>
<rect x="36" y="286" width="1" height="22" fill="#00ff00"/>
<rect x="34" y="294" width="5" height="10" fill="#00ff00"/>
<rect x="35" y="295" width="3" height="8" fill="#fff"/>
<rect x="44" y="262" width="1" height="42" fill="#00ff00"/>
<rect x="42" y="278" width="5" height="25" fill="#00ff00"/>
<rect x="43" y="279" width="3" height="23" fill="#000"/>
<rect x="52" y="260" width="1" height="20" fill="#00ff00"/>
<rect x="50" y="279" width="5" height="1" fill="#00ff00"/>
<rect x="60" y="205" width="1" height="74" fill="#00ff00"/>
<rect x="58" y="210" width="5" height="69" fill="#00ff00"/>
<rect x="59" y="211" width="3" height="67" fill="#000"/>
<rect x="68" y="178" width="1" height="44" fill="#00ff00"/>
<rect x="66" y="180" width="5" height="32" fill="#00ff00"/>
<rect x="67" y="181" width="3" height="30" fill="#000"/>
<rect x="76" y="140" width="1" height="48" fill="#00ff00"/>
<rect x="74" y="146" width="5" height="36" fill="#00ff00"/>
<rect x="75" y="147" width="3" height="34" fill="#000"/>
<rect x="84" y="140" width="1" height="27" fill="#00ff00"/>
<rect x="82" y="144" width="5" height="4" fill="#00ff00"/>
<rect x="83" y="145" width="3" height="2" fill="#fff"/>
<rect x="92" y="144" width="1" height="36" fill="#00ff00"/>
<rect x="90" y="146" width="5" height="9" fill="#00ff00"/>
<rect x="91" y="147" width="3" height="7" fill="#fff"/>
<rect x="100" y="144" width="1" height="42" fill="#00ff00"/>
<rect x="98" y="153" width="5" height="23" fill="#00ff00"/>
<rect x="99" y="154" width="3" height="21" fill="#fff"/>
<rect x="108" y="142" width="1" height="34" fill="#00ff00"/>
<rect x="106" y="156" width="5" height="20" fill="#00ff00"/>
<rect x="107" y="157" width="3" height="18" fill="#000"/>
<rect x="116" y="146" width="1" height="35" fill="#00ff00"/>
<rect x="114" y="157" width="5" height="2" fill="#00ff00"/>
<rect x="124" y="147" width="1" height="38" fill="#00ff00"/>
<rect x="122" y="156" width="5" height="5" fill="#00ff00"/>
<rect x="123" y="157" width="3" height="3" fill="#fff"/>
<rect x="132" y="140" width="1" height="24" fill="#00ff00"/>
<rect x="130" y="159" width="5" height="5" fill="#00ff00"/>
<rect x="131" y="160" width="3" height="3" fill="#fff"/>
<rect x="140" y="147" width="1" height="25" fill="#00ff00"/>
<rect x="138" y="151" width="5" height="11" fill="#00ff00"/>
<rect x="139" y="152" width="3" height="9" fill="#000"/>
<rect x="148" y="53" width="1" height="114" fill="#00ff00"/>
<rect x="146" y="91" width="5" height="59" fill="#00ff00"/>
<rect x="147" y="92" width="3" height="57" fill="#000"/>
<rect x="156" y="71" width="1" height="32" fill="#00ff00"/>
<rect x="154" y="90" width="5" height="1" fill="#00ff00"/>
<rect x="164" y="85" width="1" height="36" fill="#00ff00"/>
<rect x="162" y="90" width="5" height="26" fill="#00ff00"/>
<rect x="163" y="91" width="3" height="24" fill="#fff"/>
<rect x="172" y="105" width="1" height="55" fill="#00ff00"/>
<rect x="170" y="114" width="5" height="27" fill="#00ff00"/>
<rect x="171" y="115" width="3" height="25" fill="#fff"/>
<rect x="180" y="140" width="1" height="79" fill="#00ff00"/>
<rect x="178" y="142" width="5" height="65" fill="#00ff00"/>
<rect x="179" y="143" width="3" height="63" fill="#fff"/>
<rect x="188" y="168" width="1" height="38" fill="#00ff00"/>
<rect x="186" y="180" width="5" height="24" fill="#00ff00"/>
<rect x="187" y="181" width="3" height="22" fill="#000"/>
<rect x="196" y="178" width="1" height="35" fill="#00ff00"/>
<rect x="194" y="182" width="5" height="28" fill="#00ff00"/>
<rect x="195" y="183" width="3" height="26" fill="#fff"/>
<rect x="204" y="189" width="1" height="42" fill="#00ff00"/>
<rect x="202" y="196" width="5" height="15" fill="#00ff00"/>
<rect x="203" y="197" width="3" height="13" fill="#000"/>
<rect x="212" y="171" width="1" height="38" fill="#00ff00"/>
<rect x="210" y="196" width="5" height="1" fill="#00ff00"/>
<rect x="220" y="127" width="1" height="72" fill="#00ff00"/>
<rect x="218" y="130" width="5" height="67" fill="#00ff00"/>
<rect x="219" y="131" width="3" height="65" fill="#000"/>
<rect x="228" y="114" width="1" height="33" fill="#00ff00"/>
<rect x="226" y="122" width="5" height="7" fill="#00ff00"/>
<rect x="227" y="123" width="3" height="5" fill="#000"/>
<rect x="236" y="109" width="1" height="67" fill="#00ff00"/>
<rect x="234" y="121" width="5" height="6" fill="#00ff00"/>
<rect x="235" y="122" width="3" height="4" fill="#fff"/>
<rect x="244" y="98" width="1" height="74" fill="#00ff00"/>
<rect x="242" y="127" width="5" height="21" fill="#00ff00"/>
<rect x="243" y="128" width="3" height="19" fill="#fff"/>
<rect x="252" y="108" width="1" height="44" fill="#00ff00"/>
<rect x="250" y="138" width="5" height="12" fill="#00ff00"/>
<rect x="251" y="139" width="3" height="10" fill="#000"/>
<rect x="260" y="101" width="1" height="67" fill="#00ff00"/>
<rect x="258" y="137" width="5" height="19" fill="#00ff00"/>
<rect x="259" y="138" width="3" height="17" fill="#fff"/>
<rect x="268" y="123" width="1" height="46" fill="#00ff00"/>
<rect x="266" y="155" width="5" height="2" fill="#00ff00"/>
<rect x="276" y="141" width="1" height="45" fill="#00ff00"/>
<rect x="274" y="154" width="5" height="6" fill="#00ff00"/>
<rect x="275" y="155" width="3" height="4" fill="#fff"/>
<rect x="284" y="152" width="1" height="51" fill="#00ff00"/>
<rect x="282" y="157" width="5" height="31" fill="#00ff00"/>
<rect x="283" y="158" width="3" height="29" fill="#fff"/>
<rect x="292" y="186" width="1" height="125" fill="#00ff00"/>
<rect x="290" y="187" width="5" height="123" fill="#00ff00"/>
<rect x="291" y="188" width="3" height="121" fill="#fff"/>
<rect x="300" y="252" width="1" height="60" fill="#00ff00"/>
<rect x="298" y="295" width="5" height="14" fill="#00ff00"/>
<rect x="299" y="296" width="3" height="12" fill="#000"/>
<rect x="308" y="240" width="1" height="60" fill="#00ff00"/>
<rect x="306" y="263" width="5" height="33" fill="#00ff00"/>
<rect x="307" y="264" width="3" height="31" fill="#000"/>
<rect x="316" y="211" width="1" height="61" fill="#00ff00"/>
<rect x="314" y="234" width="5" height="30" fill="#00ff00"/>
<rect x="315" y="235" width="3" height="28" fill="#000"/>
<rect x="324" y="221" width="1" height="45" fill="#00ff00"/>
<rect x="322" y="233" width="5" height="6" fill="#00ff00"/>
<rect x="323" y="234" width="3" height="4" fill="#fff"/>
<rect x="332" y="217" width="1" height="51" fill="#00ff00"/>
<rect x="330" y="230" width="5" height="10" fill="#00ff00"/>
<rect x="331" y="231" width="3" height="8" fill="#000"/>
<rect x="340" y="212" width="1" height="42" fill="#00ff00"/>
<rect x="338" y="217" width="5" height="15" fill="#00ff00"/>
<rect x="339" y="218" width="3" height="13" fill="#000"/>
<rect x="348" y="212" width="1" height="30" fill="#00ff00"/>
<rect x="346" y="214" width="5" height="5" fill="#00ff00"/>
<rect x="347" y="215" width="3" height="3" fill="#000"/>
<rect x="356" y="207" width="1" height="38" fill="#00ff00"/>
<rect x="354" y="213" width="5" height="15" fill="#00ff00"/>
<rect x="355" y="214" width="3" height="13" fill="#fff"/>
<rect x="364" y="216" width="1" height="37" fill="#00ff00"/>
<rect x="362" y="226" width="5" height="23" fill="#00ff00"/>
<rect x="363" y="227" width="3" height="21" fill="#fff"/>
<rect x="372" y="213" width="1" height="81" fill="#00ff00"/>
<rect x="370" y="247" width="5" height="47" fill="#00ff00"/>
<rect x="371" y="248" width="3" height="45" fill="#fff"/>
<rect x="380" y="234" width="1" height="67" fill="#00ff00"/>
<rect x="378" y="234" width="5" height="60" fill="#00ff00"/>
<rect x="379" y="235" width="3" height="58" fill="#000"/>
<rect x="388" y="165" width="1" height="72" fill="#00ff00"/>
<rect x="386" y="203" width="5" height="31" fill="#00ff00"/>
<rect x="387" y="204" width="3" height="29" fill="#000"/>
<rect x="396" y="193" width="1" height="68" fill="#00ff00"/>
<rect x="394" y="201" width="5" height="4" fill="#00ff00"/>
<rect x="395" y="202" width="3" height="2" fill="#000"/>
<rect x="404" y="173" width="1" height="43" fill="#00ff00"/>
<rect x="402" y="190" width="5" height="11" fill="#00ff00"/>
<rect x="403" y="191" width="3" height="9" fill="#000"/>
<rect x="412" y="175" width="1" height="35" fill="#00ff00"/>
<rect x="410" y="186" width="5" height="4" fill="#00ff00"/>
<rect x="411" y="187" width="3" height="2" fill="#000"/>
<rect x="420" y="182" width="1" height="38" fill="#00ff00"/>
<rect x="418" y="185" width="5" height="22" fill="#00ff00"/>
<rect x="419" y="186" width="3" height="20" fill="#fff"/>
<rect x="428" y="176" width="1" height="48" fill="#00ff00"/>
<rect x="426" y="205" width="5" height="14" fill="#00ff00"/>
<rect x="427" y="206" width="3" height="12" fill="#fff"/>
<rect x="436" y="219" width="1" height="40" fill="#00ff00"/>
<rect x="434" y="219" width="5" height="40" fill="#00ff00"/>
<rect x="435" y="220" width="3" height="38" fill="#fff"/>
<rect x="444" y="238" width="1" height="22" fill="#00ff00"/>
<rect x="442" y="246" width="5" height="12" fill="#00ff00"/>
<rect x="443" y="247" width="3" height="10" fill="#000"/>
<rect x="452" y="221" width="1" height="48" fill="#00ff00"/>
<rect x="450" y="247" width="5" height="20" fill="#00ff00"/>
<rect x="451" y="248" width="3" height="18" fill="#fff"/>
<rect x="460" y="225" width="1" height="45" fill="#00ff00"/>
<rect x="458" y="229" width="5" height="37" fill="#00ff00"/>
<rect x="459" y="230" width="3" height="35" fill="#000"/>
<rect x="468" y="220" width="1" height="55" fill="#00ff00"/>
<rect x="466" y="226" width="5" height="18" fill="#00ff00"/>
<rect x="467" y="227" width="3" height="16" fill="#fff"/>
<rect x="476" y="243" width="1" height="21" fill="#00ff00"/>
<rect x="474" y="244" width="5" height="4" fill="#00ff00"/>
<rect x="475" y="245" width="3" height="2" fill="#fff"/>
<rect x="484" y="247" width="1" height="59" fill="#00ff00"/>
<rect x="482" y="249" width="5" height="18" fill="#00ff00"/>
<rect x="483" y="250" width="3" height="16" fill="#fff"/>
<rect x="492" y="260" width="1" height="68" fill="#00ff00"/>
<rect x="490" y="265" width="5" height="51" fill="#00ff00"/>
<rect x="491" y="266" width="3" height="49" fill="#fff"/>
<rect x="500" y="291" width="1" height="39" fill="#00ff00"/>
<rect x="498" y="311" width="5" height="7" fill="#00ff00"/>
<rect x="499" y="312" width="3" height="5" fill="#000"/>
<rect x="508" y="307" width="1" height="48" fill="#00ff00"/>
<rect x="506" y="310" width="5" height="25" fill="#00ff00"/>
<rect x="507" y="311" width="3" height="23" fill="#fff"/>
<rect x="516" y="285" width="1" height="51" fill="#00ff00"/>
<rect x="514" y="285" width="5" height="51" fill="#00ff00"/>
<rect x="515" y="286" width="3" height="49" fill="#000"/>
<rect x="524" y="282" width="1" height="35" fill="#00ff00"/>
<rect x="522" y="286" width="5" height="27" fill="#00ff00"/>
<rect x="523" y="287" width="3" height="25" fill="#fff"/>
<rect x="532" y="290" width="1" height="26" fill="#00ff00"/>
<rect x="530" y="293" width="5" height="22" fill="#00ff00"/>
<rect x="531" y="294" width="3" height="20" fill="#000"/>
<rect x="540" y="292" width="1" height="37" fill="#00ff00"/>
<rect x="538" y="293" width="5" height="36" fill="#00ff00"/>
<rect x="539" y="294" width="3" height="34" fill="#fff"/>
<rect x="548" y="321" width="1" height="26" fill="#00ff00"/>
<rect x="546" y="327" width="5" height="17" fill="#00ff00"/>
<rect x="547" y="328" width="3" height="15" fill="#fff"/>
<rect x="556" y="314" width="1" height="44" fill="#00ff00"/>
<rect x="554" y="321" width="5" height="22" fill="#00ff00"/>
<rect x="555" y="322" width="3" height="20" fill="#000"/>
<rect x="564" y="295" width="1" height="26" fill="#00ff00"/>
<rect x="562" y="302" width="5" height="18" fill="#00ff00"/>
<rect x="563" y="303" width="3" height="16" fill="#000"/>
<rect x="572" y="280" width="1" height="26" fill="#00ff00"/>
<rect x="570" y="286" width="5" height="18" fill="#00ff00"/>
<rect x="571" y="287" width="3" height="16" fill="#000"/>
<rect x="580" y="272" width="1" height="15" fill="#00ff00"/>
<rect x="578" y="275" width="5" height="12" fill="#00ff00"/>
<rect x="579" y="276" width="3" height="10" fill="#000"/>
<rect x="588" y="273" width="1" height="16" fill="#00ff00"/>
<rect x="586" y="277" width="5" height="10" fill="#00ff00"/>
<rect x="587" y="278" width="3" height="8" fill="#fff"/>
<rect x="596" y="287" width="1" height="27" fill="#00ff00"/>
<rect x="594" y="288" width="5" height="26" fill="#00ff00"/>
<rect x="595" y="289" width="3" height="24" fill="#fff"/>
<rect x="604" y="306" width="1" height="16" fill="#00ff00"/>
<rect x="602" y="312" width="5" height="2" fill="#00ff00"/>
<rect x="612" y="288" width="1" height="35" fill="#00ff00"/>
<rect x="610" y="290" width="5" height="25" fill="#00ff00"/>
<rect x="611" y="291" width="3" height="23" fill="#000"/>
<rect x="620" y="282" width="1" height="19" fill="#00ff00"/>
<rect x="618" y="282" width="5" height="11" fill="#00ff00"/>
<rect x="619" y="283" width="3" height="9" fill="#000"/>
<rect x="628" y="283" width="1" height="30" fill="#00ff00"/>
<rect x="626" y="283" width="5" height="30" fill="#00ff00"/>
<rect x="627" y="284" width="3" height="28" fill="#fff"/>
<rect x="636" y="307" width="1" height="22" fill="#00ff00"/>
<rect x="634" y="314" width="5" height="3" fill="#00ff00"/>
<rect x="635" y="315" width="3" height="1" fill="#fff"/>
<rect x="644" y="315" width="1" height="14" fill="#00ff00"/>
<rect x="642" y="315" width="5" height="12" fill="#00ff00"/>
<rect x="643" y="316" width="3" height="10" fill="#fff"/>
<rect x="652" y="325" width="1" height="39" fill="#00ff00"/>
<rect x="650" y="327" width="5" height="25" fill="#00ff00"/>
<rect x="651" y="328" width="3" height="23" fill="#fff"/>
<rect x="660" y="342" width="1" height="22" fill="#00ff00"/>
<rect x="658" y="349" width="5" height="2" fill="#00ff00"/>
<rect x="668" y="319" width="1" height="33" fill="#00ff00"/>
<rect x="666" y="331" width="5" height="19" fill="#00ff00"/>
<rect x="667" y="332" width="3" height="17" fill="#000"/>
<rect x="676" y="308" width="1" height="35" fill="#00ff00"/>
<rect x="674" y="317" width="5" height="14" fill="#00ff00"/>
<rect x="675" y="318" width="3" height="12" fill="#000"/>
</g>
<rect x="9" y="32" width="2" height="541" fill="#000"/>
<g id="ind">
<polyline points="11.00,440.498 12.45,440.498 20.45,476.498 28.45,510.498 36.45,526.498 44.45,526.498 52.45,510.498 60.45,467.498 68.45,430.498 76.45,404.498 84.45,404.498 92.45,404.498 100.45,410.498 108.45,421.498 116.45,439.498 124.45,461.498 132.45,492.498 140.45,510.498 148.45,464.498 156.45,429.498 164.45,415.498 172.45,422.498 180.45,461.498 188.45,490.498 196.45,517.498 204.45,530.498 212.45,536.498 220.45,513.498 228.45,476.498 236.45,428.498 244.45,418.498 252.45,426.498 260.45,439.498 268.45,462.498 276.45,498.498 284.45,545.498 292.45,549.498 300.45,549.498 308.45,545.498 316.45,538.498 324.45,526.498 332.45,505.498 340.45,476.498 348.45,448.498 356.45,401.498 364.45,426.498 372.45,475.498 380.45,493.498 388.45,470.498 396.45,456.498 404.45,436.498 412.45,418.498 420.45,418.498 428.45,430.498 436.45,468.498 444.45,510.498 452.45,537.498 460.45,537.498 468.45,529.498 476.45,520.498 484.45,517.498 492.45,517.498 500.45,517.498 508.45,533.498 516.45,533.498 524.45,535.498 532.45,518.498 540.45,513.498 548.45,513.498 556.45,503.498 564.45,485.498 572.45,465.498 580.45,458.498 588.45,426.498 596.45,438.498 604.45,434.498 612.45,447.498 620.45,454.498 628.45,491.498 636.45,514.498 644.45,525.498 652.45,525.498 660.45,530.498 668.45,537.498 676.45,533.498" fill="none" stroke="#ff0000" stroke-width="2" stroke-linejoin="round"/>
<polyline points="11.00,430.499 12.55,430.499 20.55,436.499 28.55,445.499 36.55,454.499 44.55,459.499 52.55,463.499 60.55,460.499 68.55,453.499 76.55,448.499 84.55,439.499 92.55,430.499 100.55,425.499 108.55,423.499 116.55,420.499 124.55,420.499 132.55,420.499 140.55,418.499 148.55,414.499 156.55,414.499 164.55,414.499 172.55,412.499 180.55,414.499 188.55,417.499 196.55,423.499 204.55,429.499 212.55,437.499 220.55,438.499 228.55,439.499 236.55,441.499 244.55,446.499 252.55,448.499 260.55,456.499 268.55,464.499 276.55,472.499 284.55,476.499 292.55,483.499 300.55,490.499 308.55,500.499 316.55,508.499 324.55,515.499 332.55,520.499 340.55,526.499 348.55,528.499 356.55,528.499 364.55,526.499 372.55,525.499 380.55,524.499 388.55,524.499 396.55,520.499 404.55,518.499 412.55,514.499 420.55,513.499 428.55,506.499 436.55,503.499 444.55,500.499 452.55,497.499 460.55,488.499 468.55,483.499 476.55,478.499 484.55,475.499 492.55,475.499 500.55,490.499 508.55,505.499 516.55,514.499 524.55,520.499 532.55,525.499 540.55,529.499 548.55,531.499 556.55,533.499 564.55,534.499 572.55,534.499 580.55,538.499 588.55,536.499 596.55,535.499 604.55,533.499 612.55,526.499 620.55,520.499 628.55,516.499 636.55,513.499 644.55,512.499 652.55,512.499 660.55,512.499 668.55,510.499 676.55,506.499" fill="none" stroke="#00ffff" stroke-width="2" stroke-linejoin="bevel"/>
<polyline points="11.00,474.499 12.55,474.499 20.55,474.499 28.55,472.499 36.55,470.499 44.55,466.499 52.55,458.499 60.55,450.499 68.55,442.499 76.55,435.499 84.55,427.499 92.55,421.499 100.55,414.499 108.55,412.499 116.55,411.499 124.55,408.499 132.55,407.499 140.55,407.499 148.55,406.499 156.55,406.499 164.55,406.499 172.55,406.499 180.55,407.499 188.55,407.499 196.55,408.499 204.55,409.499 212.55,410.499 220.55,410.499 228.55,411.499 236.55,411.499 244.55,411.499 252.55,411.499 260.55,412.499 268.55,413.499 276.55,413.499 284.55,414.499 292.55,421.499 300.55,427.499 308.55,430.499 316.55,434.499 324.55,437.499 332.55,440.499 340.55,444.499 348.55,447.499 356.55,450.499 364.55,456.499 372.55,464.499 380.55,467.499 388.55,470.499 396.55,474.499 404.55,476.499 412.55,478.499 420.55,484.499 428.55,490.499 436.55,497.499 444.55,504.499 452.55,511.499 460.55,518.499 468.55,525.499 476.55,529.499 484.55,530.499 492.55,531.499 500.55,532.499 508.55,532.499 516.55,533.499 524.55,534.499 532.55,535.499 540.55,536.499 548.55,536.499 556.55,536.499 564.55,536.499 572.55,535.499 580.55,534.499 588.55,534.499 596.55,534.499 604.55,534.499 612.55,534.499 620.55,533.499 628.55,533.499 636.55,533.499 644.55,532.499 652.55,532.499 660.55,532.499 668.55,532.499 676.55,532.499" fill="none" stroke="#ffff00" stroke-width="2" stroke-linejoin="bevel"/>
</g>
<rect x="11" y="34" width="670" height="1" fill="#fff"/>
<rect x="11" y="377" width="670" height="1" fill="#fff"/>
<rect x="11" y="34" width="1" height="344" fill="#fff"/>
<rect x="680" y="34" width="1" height="344" fill="#fff"/>
<rect x="11" y="379" width="670" height="1" fill="#fff"/>
<rect x="11" y="552" width="670" height="1" fill="#fff"/>
<rect x="11" y="379" width="1" height="174" fill="#fff"/>
<rect x="680" y="379" width="1" height="174" fill="#fff"/>
<rect x="681" y="57" width="2" height="1" fill="#fff"/>
<rect x="681" y="92" width="2" height="1" fill="#fff"/>
<rect x="681" y="127" width="2" height="1" fill="#fff"/>
<rect x="681" y="162" width="2" height="1" fill="#fff"/>
<rect x="681" y="197" width="2" height="1" fill="#fff"/>
<rect x="681" y="232" width="2" height="1" fill="#fff"/>
<rect x="681" y="267" width="2" height="1" fill="#fff"/>
<rect x="681" y="302" width="2" height="1" fill="#fff"/>
<rect x="681" y="337" width="2" height="1" fill="#fff"/>
<rect x="681" y="372" width="2" height="1" fill="#fff"/>
<rect x="681" y="381" width="1" height="1" fill="#fff"/>
<rect x="681" y="474" width="1" height="1" fill="#fff"/>
<rect x="681" y="552" width="1" height="1" fill="#fff"/>
<rect x="12" y="553" width="1" height="3" fill="#fff"/>
<rect x="76" y="553" width="1" height="3" fill="#fff"/>
<rect x="140" y="553" width="1" height="3" fill="#fff"/>
<rect x="204" y="553" width="1" height="3" fill="#fff"/>
<rect x="268" y="553" width="1" height="3" fill="#fff"/>
<rect x="332" y="553" width="1" height="3" fill="#fff"/>
<rect x="396" y="553" width="1" height="3" fill="#fff"/>
<rect x="460" y="553" width="1" height="3" fill="#fff"/>
<rect x="524" y="553" width="1" height="3" fill="#fff"/>
<rect x="588" y="553" width="1" height="3" fill="#fff"/>
<rect x="652" y="553" width="1" height="3" fill="#fff"/>
<path d="M12 547L17 552H12Z" fill="#778899"/>
<path d="M15 41H22V42H21V43H20V44H19V45H18V44H17V43H16V42H15Z" fill="#fff"/>
<g shape-rendering="geometricPrecision">
<path id="star" fill="#ffff00" d="M235.6 91L237.2 96.1L242.9 96.1L239.0 99.3L240.2 105L235.6 102L231.2 105L232.3 99.3L228.5 96.1L234.0 96.1Z"/>
<path id="arrow" fill="#ffff00" d="M242 62H247.2V75.5L254.2 69V76.2L244.5 85.8L234.8 76.2V69L242 75.5Z"/>
</g>
</svg>
<svg id="labels" width="738" height="583" viewBox="0 0 738 583">
<text x="686.5" y="61" font-size="10.2" textLength="32.5" lengthAdjust="spacingAndGlyphs" text-anchor="start" fill="#fff">1.18065</text>
<text x="686.5" y="96" font-size="10.2" textLength="32.5" lengthAdjust="spacingAndGlyphs" text-anchor="start" fill="#fff">1.18025</text>
<text x="686.5" y="131" font-size="10.2" textLength="32.5" lengthAdjust="spacingAndGlyphs" text-anchor="start" fill="#fff">1.17985</text>
<text x="686.5" y="166" font-size="10.2" textLength="32.5" lengthAdjust="spacingAndGlyphs" text-anchor="start" fill="#fff">1.17945</text>
<text x="686.5" y="201" font-size="10.2" textLength="32.5" lengthAdjust="spacingAndGlyphs" text-anchor="start" fill="#fff">1.17905</text>
<text x="686.5" y="236" font-size="10.2" textLength="32.5" lengthAdjust="spacingAndGlyphs" text-anchor="start" fill="#fff">1.17865</text>
<text x="686.5" y="271" font-size="10.2" textLength="32.5" lengthAdjust="spacingAndGlyphs" text-anchor="start" fill="#fff">1.17825</text>
<text x="686.5" y="306" font-size="10.2" textLength="32.5" lengthAdjust="spacingAndGlyphs" text-anchor="start" fill="#fff">1.17785</text>
<text x="686.5" y="341" font-size="10.2" textLength="32.5" lengthAdjust="spacingAndGlyphs" text-anchor="start" fill="#fff">1.17745</text>
<text x="686.5" y="376" font-size="10.2" textLength="32.5" lengthAdjust="spacingAndGlyphs" text-anchor="start" fill="#fff">1.17705</text>
<text x="684.3" y="390" font-size="10.2" textLength="14.8" lengthAdjust="spacingAndGlyphs" text-anchor="start" fill="#fff">120</text>
<text x="683.7" y="400" font-size="10.2" textLength="14.4" lengthAdjust="spacingAndGlyphs" text-anchor="start" fill="#fff">100</text>
<text x="683" y="416" font-size="10.2" textLength="10.1" lengthAdjust="spacingAndGlyphs" text-anchor="start" fill="#fff">80</text>
<text x="683" y="439" font-size="10.2" textLength="10.1" lengthAdjust="spacingAndGlyphs" text-anchor="start" fill="#fff">50</text>
<text x="684.1" y="478" font-size="10.2" textLength="17.6" lengthAdjust="spacingAndGlyphs" text-anchor="start" fill="#fff">0.00</text>
<text x="683.2" y="517" font-size="10.2" textLength="13.1" lengthAdjust="spacingAndGlyphs" text-anchor="start" fill="#fff">-50</text>
<text x="683.2" y="540" font-size="10.2" textLength="13.1" lengthAdjust="spacingAndGlyphs" text-anchor="start" fill="#fff">-80</text>
<text x="684.1" y="549" font-size="10.2" textLength="17.9" lengthAdjust="spacingAndGlyphs" text-anchor="start" fill="#fff">-100</text>
<text x="11" y="565" font-size="10.2" textLength="46" lengthAdjust="spacingAndGlyphs" text-anchor="start" fill="#fff">6 Oct 2020</text>
<text x="75" y="565" font-size="10.2" textLength="49.2" lengthAdjust="spacingAndGlyphs" text-anchor="start" fill="#fff">6 Oct 14:35</text>
<text x="139" y="565" font-size="10.2" textLength="49.2" lengthAdjust="spacingAndGlyphs" text-anchor="start" fill="#fff">6 Oct 15:15</text>
<text x="203" y="565" font-size="10.2" textLength="49.2" lengthAdjust="spacingAndGlyphs" text-anchor="start" fill="#fff">6 Oct 15:55</text>
<text x="267" y="565" font-size="10.2" textLength="49.2" lengthAdjust="spacingAndGlyphs" text-anchor="start" fill="#fff">6 Oct 16:35</text>
<text x="331" y="565" font-size="10.2" textLength="49.2" lengthAdjust="spacingAndGlyphs" text-anchor="start" fill="#fff">6 Oct 17:15</text>
<text x="395" y="565" font-size="10.2" textLength="49.2" lengthAdjust="spacingAndGlyphs" text-anchor="start" fill="#fff">6 Oct 17:55</text>
<text x="459" y="565" font-size="10.2" textLength="49.2" lengthAdjust="spacingAndGlyphs" text-anchor="start" fill="#fff">6 Oct 18:35</text>
<text x="523" y="565" font-size="10.2" textLength="49.2" lengthAdjust="spacingAndGlyphs" text-anchor="start" fill="#fff">6 Oct 19:15</text>
<text x="587" y="565" font-size="10.2" textLength="49.2" lengthAdjust="spacingAndGlyphs" text-anchor="start" fill="#fff">6 Oct 19:55</text>
<text x="651" y="565" font-size="10.2" textLength="49.2" lengthAdjust="spacingAndGlyphs" text-anchor="start" fill="#fff">6 Oct 20:35</text>
<text x="27.3" y="46" font-size="10.2" textLength="54" lengthAdjust="spacingAndGlyphs" text-anchor="start" fill="#fff">EURUSD,M5</text>
<text x="88.5" y="46" font-size="10.2" textLength="32.4" lengthAdjust="spacingAndGlyphs" text-anchor="start" fill="#fff">1.17277</text>
<text x="124.3" y="46" font-size="10.2" textLength="32.2" lengthAdjust="spacingAndGlyphs" text-anchor="start" fill="#fff">1.17307</text>
<text x="160.3" y="46" font-size="10.2" textLength="32.5" lengthAdjust="spacingAndGlyphs" text-anchor="start" fill="#fff">1.17244</text>
<text x="196.4" y="46" font-size="10.2" textLength="32.4" lengthAdjust="spacingAndGlyphs" text-anchor="start" fill="#fff">1.17303</text>
<text x="16.3" y="392" font-size="10.2" textLength="41.7" lengthAdjust="spacingAndGlyphs" text-anchor="start" fill="#fff">R(9,26,52)</text>
<text x="62.7" y="392" font-size="10.2" textLength="17.3" lengthAdjust="spacingAndGlyphs" text-anchor="start" fill="#fff">58.3</text>
<text x="83.3" y="392" font-size="10.2" textLength="20.5" lengthAdjust="spacingAndGlyphs" text-anchor="start" fill="#fff">-86.9</text>
<text x="107.7" y="392" font-size="10.2" textLength="20" lengthAdjust="spacingAndGlyphs" text-anchor="start" fill="#fff">-35.5</text>
</svg>
</div>
</body>
</html>
